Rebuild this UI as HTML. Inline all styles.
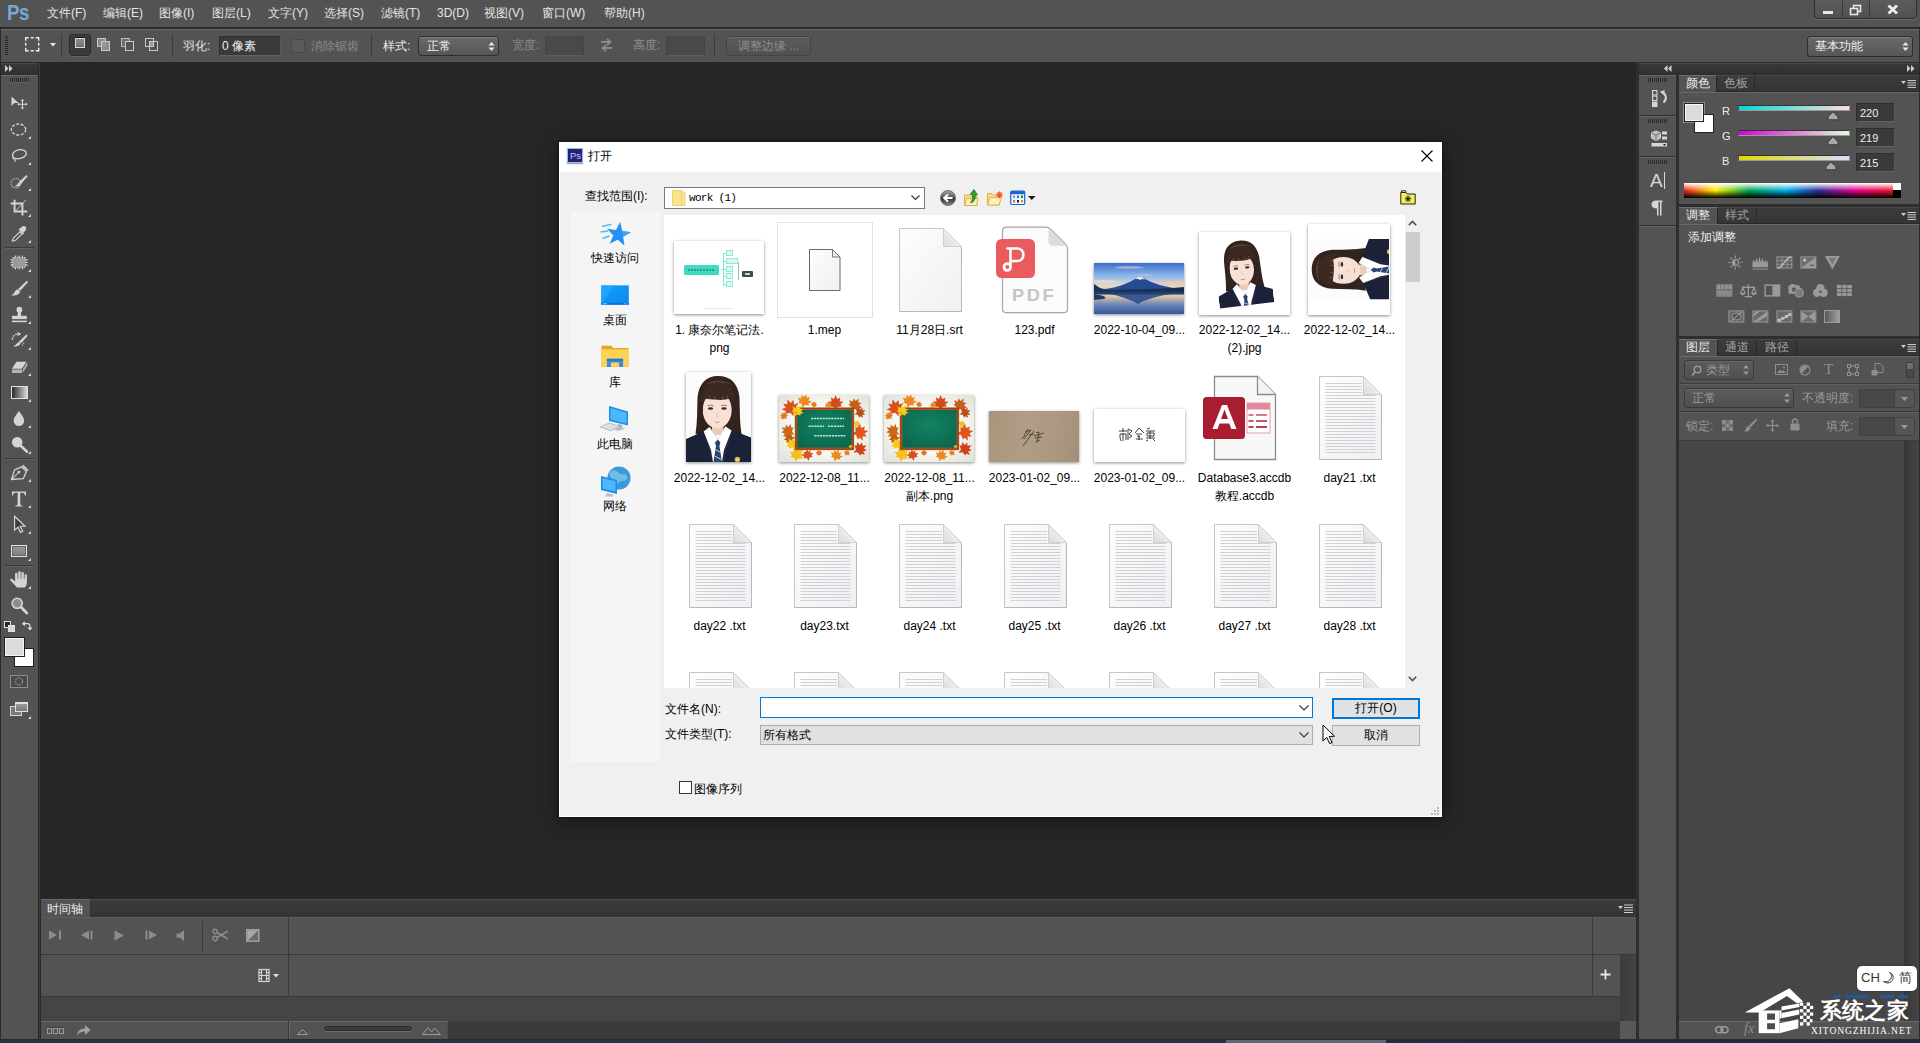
<!DOCTYPE html>
<html lang="zh"><head><meta charset="utf-8"><title>Photoshop</title>
<style>*{box-sizing:border-box;margin:0;padding:0}
html,body{width:1920px;height:1043px;overflow:hidden;background:#262626}
body{font-family:"Liberation Sans",sans-serif;font-size:12px;color:#dcdcdc;position:relative}
.a{position:absolute}
svg.a{overflow:visible}
.t{position:absolute;white-space:nowrap;line-height:14px;height:14px}
.ui{background:#535353}
.dis{color:#8c8c8c}
.tabbar{position:absolute;background:linear-gradient(#3b3b3b,#353535);border-top:1px solid #4a4a4a;border-bottom:1px solid #282828}
.tab{position:absolute;height:16px;border-right:1px solid #2a2a2a;border-top:1px solid #4a4a4a;color:#a4a4a4;text-align:center;line-height:15px;font-size:12px}
.tab.on{background:#535353;color:#ececec;border-top:1px solid #707070;height:17px}
.dd{position:absolute;border:1px solid #2d2d2d;border-radius:3px;background:linear-gradient(#6a6a6a,#565656);box-shadow:inset 0 1px 0 #7e7e7e}
.fld{position:absolute;background:#3a3a3a;border:1px solid #2f2f2f;border-bottom-color:#626262;border-right-color:#5a5a5a}
.fldd{position:absolute;background:#494949;border:1px solid #454545;border-bottom-color:#5c5c5c}
.lbl{position:absolute;white-space:nowrap;color:#000;font-size:12px;line-height:18px;height:18px;text-align:center;width:105px}
.dl{position:absolute;white-space:nowrap;color:#000;font-size:12px;line-height:14px;height:14px}
</style></head>
<body>


<!-- p1_frame -->

<div class="a ui" style="left:0px;top:0px;width:1920px;height:27px;"></div>
<div class="a" style="left:0px;top:27px;width:1920px;height:2px;background:#2a2a2a"></div>
<div class="a ui" style="left:0px;top:29px;width:1920px;height:33px;border-top:1px solid #696969"></div>
<div class="t" style="left:7px;top:-1.5px;font-size:22px;font-weight:bold;color:#7aa7d8;line-height:28px;height:28px;letter-spacing:-0.5px;transform:scaleX(0.85);transform-origin:0 0">Ps</div>
<div class="t" style="left:47px;top:6px;color:#e4e4e4;font-size:12px">文件(F)</div>
<div class="t" style="left:103px;top:6px;color:#e4e4e4;font-size:12px">编辑(E)</div>
<div class="t" style="left:159px;top:6px;color:#e4e4e4;font-size:12px">图像(I)</div>
<div class="t" style="left:212px;top:6px;color:#e4e4e4;font-size:12px">图层(L)</div>
<div class="t" style="left:268px;top:6px;color:#e4e4e4;font-size:12px">文字(Y)</div>
<div class="t" style="left:324px;top:6px;color:#e4e4e4;font-size:12px">选择(S)</div>
<div class="t" style="left:381px;top:6px;color:#e4e4e4;font-size:12px">滤镜(T)</div>
<div class="t" style="left:437px;top:6px;color:#e4e4e4;font-size:12px">3D(D)</div>
<div class="t" style="left:484px;top:6px;color:#e4e4e4;font-size:12px">视图(V)</div>
<div class="t" style="left:542px;top:6px;color:#e4e4e4;font-size:12px">窗口(W)</div>
<div class="t" style="left:604px;top:6px;color:#e4e4e4;font-size:12px">帮助(H)</div>
<div class="a" style="left:1814px;top:-3px;width:103px;height:22px;border:1px solid #2e2e2e;border-radius:4px;background:linear-gradient(#5e5e5e,#505050);box-shadow:0 1px 0 #6a6a6a"></div>
<div class="a" style="left:1842px;top:0px;width:1px;height:18px;background:#3a3a3a"></div>
<div class="a" style="left:1869px;top:0px;width:1px;height:18px;background:#3a3a3a"></div>
<div class="a" style="left:1823px;top:11px;width:10px;height:3px;background:#e8e8e8"></div>
<svg class="a" style="left:1849px;top:4px;" width="14" height="12" viewBox="0 0 14 12"><rect x="4.5" y="1.5" width="7" height="6" fill="none" stroke="#e8e8e8" stroke-width="1.6"/><rect x="1.5" y="4.5" width="7" height="6" fill="#555" stroke="#e8e8e8" stroke-width="1.6"/></svg>
<svg class="a" style="left:1887px;top:4px;" width="12" height="11" viewBox="0 0 12 11"><path d="M1.5 1.5L10 9.5M10 1.5L1.5 9.5" stroke="#ececec" stroke-width="2.9"/></svg>
<div class="a" style="left:5px;top:36px;width:3px;height:1px;background:#2c2c2c"></div>
<div class="a" style="left:5px;top:38px;width:3px;height:1px;background:#2c2c2c"></div>
<div class="a" style="left:5px;top:40px;width:3px;height:1px;background:#2c2c2c"></div>
<div class="a" style="left:5px;top:42px;width:3px;height:1px;background:#2c2c2c"></div>
<div class="a" style="left:5px;top:44px;width:3px;height:1px;background:#2c2c2c"></div>
<div class="a" style="left:5px;top:46px;width:3px;height:1px;background:#2c2c2c"></div>
<div class="a" style="left:5px;top:48px;width:3px;height:1px;background:#2c2c2c"></div>
<div class="a" style="left:5px;top:50px;width:3px;height:1px;background:#2c2c2c"></div>
<div class="a" style="left:5px;top:52px;width:3px;height:1px;background:#2c2c2c"></div>
<div class="a" style="left:5px;top:54px;width:3px;height:1px;background:#2c2c2c"></div>
<div class="a" style="left:0px;top:29px;width:1px;height:33px;background:#2a2a2a"></div>
<div class="a" style="left:1919px;top:29px;width:1px;height:33px;background:#2a2a2a"></div>
<svg class="a" style="left:25px;top:37px;" width="15" height="15" viewBox="0 0 15 15"><rect x="0.7" y="0.7" width="13" height="13" fill="none" stroke="#ececec" stroke-width="1.4" stroke-dasharray="3 2 3 2 6 2 3 2 6 2 3 2 6 2 3 2 3"/></svg>
<svg class="a" style="left:50px;top:43px;" width="6" height="4" viewBox="0 0 6 4"><path d="M0 0h6L3 3.5z" fill="#ececec"/></svg>
<div class="a" style="left:61px;top:34px;width:1px;height:23px;background:#3c3c3c"></div>
<div class="a" style="left:69px;top:34px;width:22px;height:22px;background:#3a3a3a;border:1px solid #2e2e2e;border-radius:3px;box-shadow:0 1px 0 #646464"></div>
<div class="a" style="left:75px;top:38px;width:10px;height:10px;background:linear-gradient(#8e8e8e,#6e6e6e);border:1px solid #d8d8d8;box-shadow:0 -1px 0 #1e1e1e"></div>
<div class="a" style="left:97px;top:38px;width:9px;height:9px;background:#8a8a8a;border:1px solid #c8c8c8"></div>
<div class="a" style="left:101px;top:41px;width:9px;height:10px;background:rgba(150,150,150,.9);border:1px solid #c8c8c8"></div>
<div class="a" style="left:121px;top:38px;width:9px;height:9px;background:#6f6f6f;border:1px solid #b8b8b8"></div>
<div class="a" style="left:125px;top:41px;width:9px;height:10px;background:#535353;border:1px solid #c8c8c8"></div>
<div class="a" style="left:145px;top:38px;width:9px;height:9px;border:1px solid #c8c8c8"></div>
<div class="a" style="left:149px;top:41px;width:9px;height:10px;border:1px solid #c8c8c8"></div>
<div class="a" style="left:149px;top:41px;width:5px;height:6px;background:#9a9a9a;border:1px solid #c8c8c8"></div>
<div class="a" style="left:172px;top:34px;width:1px;height:23px;background:#3c3c3c"></div>
<div class="t" style="left:183px;top:39px;color:#e4e4e4">羽化:</div>
<div class="fld" style="left:219px;top:36px;width:62px;height:20px;"></div>
<div class="t" style="left:222px;top:39px;color:#ececec">0 像素</div>
<div class="a" style="left:291px;top:39px;width:14px;height:14px;background:#5a5a5a;border:1px solid #484848;border-radius:2px"></div>
<div class="t dis" style="left:311px;top:39px;">消除锯齿</div>
<div class="a" style="left:371px;top:34px;width:1px;height:23px;background:#3c3c3c"></div>
<div class="t" style="left:383px;top:39px;color:#ececec">样式:</div>
<div class="dd" style="left:418px;top:36px;width:81px;height:20px;"></div>
<div class="t" style="left:427px;top:39px;color:#f0f0f0">正常</div>
<svg class="a" style="left:488px;top:42px;" width="7" height="9" viewBox="0 0 7 9"><path d="M3.5 0L6.5 3.5H0.5zM3.5 9L6.5 5.5H0.5z" fill="#e8e8e8"/></svg>
<div class="t dis" style="left:512px;top:38px;">宽度:</div>
<div class="fldd" style="left:545px;top:36px;width:39px;height:20px;"></div>
<svg class="a" style="left:599px;top:38px;" width="15" height="14" viewBox="0 0 15 14"><path d="M2 4h9M8 1l3.5 3L8 7M13 10H4M7 7l-3.5 3L7 13" fill="none" stroke="#8a8a8a" stroke-width="1.8"/></svg>
<div class="t dis" style="left:633px;top:38px;">高度:</div>
<div class="fldd" style="left:666px;top:36px;width:39px;height:20px;"></div>
<div class="a" style="left:714px;top:34px;width:1px;height:23px;background:#3c3c3c"></div>
<div class="a" style="left:726px;top:36px;width:85px;height:20px;border:1px solid #444;border-radius:3px;background:linear-gradient(#5c5c5c,#515151);box-shadow:inset 0 1px 0 #686868"></div>
<div class="t" style="left:738px;top:39px;color:#8e8e8e">调整边缘 ...</div>
<div class="dd" style="left:1807px;top:36px;width:106px;height:21px;"></div>
<div class="t" style="left:1815px;top:39px;color:#f0f0f0">基本功能</div>
<svg class="a" style="left:1902px;top:42px;" width="7" height="9" viewBox="0 0 7 9"><path d="M3.5 0L6.5 3.5H0.5zM3.5 9L6.5 5.5H0.5z" fill="#e8e8e8"/></svg>

<!-- p2_tools -->

<div class="a" style="left:0px;top:62px;width:41px;height:977px;background:#2a2a2a"></div>
<div class="a" style="left:39px;top:63px;width:1px;height:976px;background:#3a3a3a"></div>
<div class="a" style="left:0px;top:62px;width:1px;height:981px;background:#2a2a2a"></div>
<div class="a" style="left:0px;top:62px;width:41px;height:1px;background:#2a2a2a"></div>
<div class="a" style="left:1px;top:63px;width:37px;height:11px;background:linear-gradient(#383838,#303030);border-top:1px solid #484848"></div>
<div class="a" style="left:1px;top:74px;width:37px;height:1px;background:#2c2c2c"></div>
<div class="a ui" style="left:1px;top:75px;width:37px;height:964px;border-top:1px solid #6a6a6a"></div>
<svg class="a" style="left:5px;top:65px;" width="8" height="7" viewBox="0 0 8 7"><path d="M0 0l3.5 3.5L0 7zM4 0l3.5 3.5L4 7z" fill="#d0d0d0"/></svg>
<div class="a" style="left:10px;top:78px;width:1px;height:4px;background:#2a2a2a;box-shadow:0 1px 0 #6a6a6a"></div>
<div class="a" style="left:12px;top:78px;width:1px;height:4px;background:#2a2a2a;box-shadow:0 1px 0 #6a6a6a"></div>
<div class="a" style="left:14px;top:78px;width:1px;height:4px;background:#2a2a2a;box-shadow:0 1px 0 #6a6a6a"></div>
<div class="a" style="left:16px;top:78px;width:1px;height:4px;background:#2a2a2a;box-shadow:0 1px 0 #6a6a6a"></div>
<div class="a" style="left:18px;top:78px;width:1px;height:4px;background:#2a2a2a;box-shadow:0 1px 0 #6a6a6a"></div>
<div class="a" style="left:20px;top:78px;width:1px;height:4px;background:#2a2a2a;box-shadow:0 1px 0 #6a6a6a"></div>
<div class="a" style="left:22px;top:78px;width:1px;height:4px;background:#2a2a2a;box-shadow:0 1px 0 #6a6a6a"></div>
<div class="a" style="left:24px;top:78px;width:1px;height:4px;background:#2a2a2a;box-shadow:0 1px 0 #6a6a6a"></div>
<div class="a" style="left:26px;top:78px;width:1px;height:4px;background:#2a2a2a;box-shadow:0 1px 0 #6a6a6a"></div>
<div class="a" style="left:28px;top:78px;width:1px;height:4px;background:#2a2a2a;box-shadow:0 1px 0 #6a6a6a"></div>
<div class="a" style="left:5px;top:247px;width:29px;height:1px;background:#3a3a3a;box-shadow:0 1px 0 #626262"></div>
<div class="a" style="left:5px;top:458px;width:29px;height:1px;background:#3a3a3a;box-shadow:0 1px 0 #626262"></div>
<div class="a" style="left:5px;top:565px;width:29px;height:1px;background:#3a3a3a;box-shadow:0 1px 0 #626262"></div>
<svg class="a" style="left:7.6px;top:91.5px;" width="22.75" height="21" viewBox="0 0 26 24"><path d="M4 5v11l3.5-3.5H12z" fill="#d4d4d4"/><path d="M16.5 9.5v9M12 14h9" stroke="#d4d4d4" stroke-width="1.3"/><path d="M16.5 8l2 2.3h-4zM16.5 20l2-2.3h-4zM10.5 14l2.3-2v4zM22.5 14l-2.3-2v4z" fill="#d4d4d4"/></svg>
<svg class="a" style="left:7.6px;top:118.5px;" width="22.75" height="21" viewBox="0 0 26 24"><ellipse cx="12" cy="12" rx="8.2" ry="6.3" fill="none" stroke="#d4d4d4" stroke-width="1.5" stroke-dasharray="3.4 1.8"/></svg>
<svg class="a" style="left:28px;top:136px;" width="3" height="3" viewBox="0 0 3 3"><path d="M3 0v3H0z" fill="#d8d8d8"/></svg>
<svg class="a" style="left:7.6px;top:144.5px;" width="22.75" height="21" viewBox="0 0 26 24"><ellipse cx="13" cy="10.5" rx="8" ry="5" fill="none" stroke="#d4d4d4" stroke-width="1.5" transform="rotate(-12 13 10.5)"/><path d="M6.5 13.5c-1.5 1-1 2.6.6 2.5 1.6-.2 1.4 2 .2 3.4" fill="none" stroke="#d4d4d4" stroke-width="1.3"/></svg>
<svg class="a" style="left:28px;top:162px;" width="3" height="3" viewBox="0 0 3 3"><path d="M3 0v3H0z" fill="#d8d8d8"/></svg>
<svg class="a" style="left:7.6px;top:170.5px;" width="22.75" height="21" viewBox="0 0 26 24"><circle cx="9" cy="14" r="5.5" fill="none" stroke="#d4d4d4" stroke-width="1.3" stroke-dasharray="1.2 1.3"/><path d="M21 4.5l1.5 1.5-7.5 8.5-2.5-1.8z" fill="#d4d4d4"/><path d="M12.3 12.8l2.5 2c-1.5 3-5 3.6-7.2 2.5 2.2-.6 3-2.6 4.7-4.5z" fill="#d4d4d4"/></svg>
<svg class="a" style="left:28px;top:188px;" width="3" height="3" viewBox="0 0 3 3"><path d="M3 0v3H0z" fill="#d8d8d8"/></svg>
<svg class="a" style="left:7.6px;top:196.5px;" width="22.75" height="21" viewBox="0 0 26 24"><path d="M7.5 3v13.5H22M3 7.5h13.5V21" fill="none" stroke="#d4d4d4" stroke-width="2.2"/><path d="M9 15.5L20.5 3.5" stroke="#d4d4d4" stroke-width="1"/></svg>
<svg class="a" style="left:28px;top:214px;" width="3" height="3" viewBox="0 0 3 3"><path d="M3 0v3H0z" fill="#d8d8d8"/></svg>
<svg class="a" style="left:7.6px;top:222.5px;" width="22.75" height="21" viewBox="0 0 26 24"><path d="M5 20.5l1-3 7.5-7.5 2.5 2.5-7.5 7.5z" fill="none" stroke="#d4d4d4" stroke-width="1.3"/><path d="M12.5 8l5 5 1-1-1-1 2.5-2.5c1.2-1.2 1.2-3 0-4.2-1.2-1.2-3-1.2-4.2 0L13.5 6.8l-1-1z" fill="#d4d4d4"/></svg>
<svg class="a" style="left:28px;top:240px;" width="3" height="3" viewBox="0 0 3 3"><path d="M3 0v3H0z" fill="#d8d8d8"/></svg>
<svg class="a" style="left:7.6px;top:251.5px;" width="22.75" height="21" viewBox="0 0 26 24"><rect x="5" y="6" width="15" height="12" rx="2.5" fill="#9a9a9a" stroke="#d4d4d4" stroke-width="1.4" stroke-dasharray="1.5 1.2"/><path d="M3 9h2M3 12h2M3 15h2M20 9h2.5M20 12h2.5M20 15h2.5M8.5 4v2M12.5 4v2M16.5 4v2M8.5 18v2M12.5 18v2M16.5 18v2" stroke="#d4d4d4" stroke-width="1.2"/></svg>
<svg class="a" style="left:28px;top:269px;" width="3" height="3" viewBox="0 0 3 3"><path d="M3 0v3H0z" fill="#d8d8d8"/></svg>
<svg class="a" style="left:7.6px;top:277.5px;" width="22.75" height="21" viewBox="0 0 26 24"><path d="M21.5 3l1.5 1.5-9 10-2.5-2z" fill="#d4d4d4"/><path d="M11 12.8l3 2.6c-1 4.4-6.5 5.6-11 4 2.5-.3 3.5-1.5 4.5-3.5.8-1.6 2-2.6 3.5-3.1z" fill="#d4d4d4"/></svg>
<svg class="a" style="left:28px;top:295px;" width="3" height="3" viewBox="0 0 3 3"><path d="M3 0v3H0z" fill="#d8d8d8"/></svg>
<svg class="a" style="left:7.6px;top:303.5px;" width="22.75" height="21" viewBox="0 0 26 24"><circle cx="13" cy="6.5" r="3.3" fill="#d4d4d4"/><path d="M11.5 9h3l.8 5h-4.6z" fill="#d4d4d4"/><rect x="4.5" y="13.5" width="17" height="3.8" fill="#d4d4d4"/><rect x="4.5" y="19" width="17" height="1.8" fill="#d4d4d4"/></svg>
<svg class="a" style="left:28px;top:321px;" width="3" height="3" viewBox="0 0 3 3"><path d="M3 0v3H0z" fill="#d8d8d8"/></svg>
<svg class="a" style="left:7.6px;top:329.5px;" width="22.75" height="21" viewBox="0 0 26 24"><path d="M21 5l1.5 1.5-7.5 8.5-2.5-2z" fill="#d4d4d4"/><path d="M12 13.5l2.5 2c-1.5 3-5.5 4-8.5 3 2.5-.5 3.8-2.5 6-5z" fill="#d4d4d4"/><path d="M5 11c0-4 3-6.5 7-6.5" fill="none" stroke="#d4d4d4" stroke-width="1.6" stroke-dasharray="2.2 1.2"/><path d="M11 2l4 2.5L11 7z" fill="#d4d4d4"/><path d="M16 17.5a7 7 0 0 0 2.5-4" fill="none" stroke="#d4d4d4" stroke-width="1.2" stroke-dasharray="1.2 1.2"/></svg>
<svg class="a" style="left:28px;top:347px;" width="3" height="3" viewBox="0 0 3 3"><path d="M3 0v3H0z" fill="#d8d8d8"/></svg>
<svg class="a" style="left:7.6px;top:355.5px;" width="22.75" height="21" viewBox="0 0 26 24"><path d="M9.5 6.5h11.5l-5 8H4.5z" fill="#d4d4d4"/><path d="M4.5 15.5H16v4H4.5zM17 15l5-8v4l-5 8z" fill="#b4b4b4"/></svg>
<svg class="a" style="left:28px;top:373px;" width="3" height="3" viewBox="0 0 3 3"><path d="M3 0v3H0z" fill="#d8d8d8"/></svg>
<div class="a" style="left:11px;top:386px;width:17px;height:13px;border:1px solid #e0e0e0;background:linear-gradient(90deg,#2a2a2a,#d8d8d8)"></div>
<svg class="a" style="left:28px;top:399px;" width="3" height="3" viewBox="0 0 3 3"><path d="M3 0v3H0z" fill="#d8d8d8"/></svg>
<svg class="a" style="left:7.6px;top:407.5px;" width="22.75" height="21" viewBox="0 0 26 24"><path d="M12.5 3.5c3.5 5 6 8 6 11.2a6 6 0 0 1-12 0c0-3.2 2.5-6.2 6-11.2z" fill="#d4d4d4"/></svg>
<svg class="a" style="left:28px;top:425px;" width="3" height="3" viewBox="0 0 3 3"><path d="M3 0v3H0z" fill="#d8d8d8"/></svg>
<svg class="a" style="left:7.6px;top:433.5px;" width="22.75" height="21" viewBox="0 0 26 24"><circle cx="10.5" cy="9.5" r="6" fill="#d4d4d4"/><path d="M14.5 13.5l7 6.5" stroke="#d4d4d4" stroke-width="3" stroke-linecap="round"/></svg>
<svg class="a" style="left:28px;top:451px;" width="3" height="3" viewBox="0 0 3 3"><path d="M3 0v3H0z" fill="#d8d8d8"/></svg>
<svg class="a" style="left:7.6px;top:461.5px;" width="22.75" height="21" viewBox="0 0 26 24"><path d="M4 20l3.5-11 8-3.5 5.5 5.5-3.5 8z" fill="none" stroke="#d4d4d4" stroke-width="1.5"/><path d="M4.5 19.5l7.5-7.5" stroke="#d4d4d4" stroke-width="1.2"/><circle cx="12.5" cy="11.5" r="1.6" fill="#d4d4d4"/><path d="M16 4.5l6 6 1.5-1.5-6-6z" fill="#d4d4d4"/></svg>
<svg class="a" style="left:28px;top:479px;" width="3" height="3" viewBox="0 0 3 3"><path d="M3 0v3H0z" fill="#d8d8d8"/></svg>
<svg class="a" style="left:7.6px;top:487.5px;" width="22.75" height="21" viewBox="0 0 26 24"><path d="M4.5 4h16v4.5h-1.2c-.3-2-1-3-3-3h-2.3v12.5c0 1.5.5 2 2.5 2v1.2H8.5V20c2 0 2.5-.5 2.5-2V5.5H8.7c-2 0-2.7 1-3 3H4.5z" fill="#d4d4d4"/></svg>
<svg class="a" style="left:28px;top:505px;" width="3" height="3" viewBox="0 0 3 3"><path d="M3 0v3H0z" fill="#d8d8d8"/></svg>
<svg class="a" style="left:7.6px;top:513.5px;" width="22.75" height="21" viewBox="0 0 26 24"><path d="M7.5 2.5v16l4-3.5 2.8 6 2.5-1.2-2.8-5.8h5.5z" fill="#3c3c3c" stroke="#d4d4d4" stroke-width="1.4"/></svg>
<svg class="a" style="left:28px;top:531px;" width="3" height="3" viewBox="0 0 3 3"><path d="M3 0v3H0z" fill="#d8d8d8"/></svg>
<div class="a" style="left:11px;top:545px;width:16px;height:12px;border:1px solid #e0e0e0;background:linear-gradient(#9a9a9a,#7e7e7e);box-shadow:inset 0 0 0 1px #666"></div>
<svg class="a" style="left:28px;top:558px;" width="3" height="3" viewBox="0 0 3 3"><path d="M3 0v3H0z" fill="#d8d8d8"/></svg>
<svg class="a" style="left:7.6px;top:568.5px;" width="22.75" height="21" viewBox="0 0 26 24"><path transform="translate(-1 0) scale(1.2 1)" d="M9.5 21C7.5 19 6 16.5 3.2 13.2 2.2 12 3.8 10.6 5 11.6L7.6 14.2V5.5c0-1.6 2.3-1.6 2.3 0V11h.7V3.8c0-1.6 2.3-1.6 2.3 0V11h.7V4.6c0-1.6 2.3-1.6 2.3 0v6.9h.7V7c0-1.5 2.2-1.5 2.2 0v8.5c0 2.5-.8 4-1.8 5.5z" fill="#d4d4d4"/></svg>
<svg class="a" style="left:28px;top:586px;" width="3" height="3" viewBox="0 0 3 3"><path d="M3 0v3H0z" fill="#d8d8d8"/></svg>
<svg class="a" style="left:7.6px;top:594.5px;" width="22.75" height="21" viewBox="0 0 26 24"><circle cx="10.5" cy="9.5" r="5.8" fill="#8c8c8c" stroke="#d4d4d4" stroke-width="1.8"/><path d="M15 14l6.5 6.5" stroke="#d4d4d4" stroke-width="3.2" stroke-linecap="round"/></svg>
<div class="a" style="left:4px;top:621px;width:7px;height:7px;background:#2a2a2a;border:1px solid #e0e0e0"></div>
<div class="a" style="left:8px;top:625px;width:7px;height:7px;background:#d8d8d8;border:1px solid #e0e0e0"></div>
<svg class="a" style="left:21px;top:619px;" width="12" height="12" viewBox="0 0 14 14"><path d="M3.5 5.5h4.5a2.5 2.5 0 0 1 2.5 2.5v3" fill="none" stroke="#e0e0e0" stroke-width="1.4"/><path d="M4.5 2.5L1 5.5l3.5 3zM7.5 10l3 3.5 3-3.5z" fill="#e0e0e0"/></svg>
<div class="a" style="left:14px;top:648px;width:20px;height:19px;background:#fff;border:1px solid #1e1e1e;box-shadow:inset 0 0 0 1px #fff"></div>
<div class="a" style="left:4px;top:637px;width:21px;height:20px;background:#dcdbd7;border:1px solid #1e1e1e;box-shadow:inset 0 0 0 1px #f4f4f4"></div>
<div class="a" style="left:10px;top:675px;width:18px;height:13px;background:#4a4a4a;border:1px solid #8e8e8e"></div>
<svg class="a" style="left:13px;top:676px;" width="12" height="11" viewBox="0 0 12 11"><circle cx="6" cy="5.5" r="3.6" fill="none" stroke="#c8c8c8" stroke-width="1" stroke-dasharray="1 1.1"/></svg>
<div class="a" style="left:10px;top:706px;width:12px;height:10px;background:#7a7a7a;border:1px solid #d8d8d8"></div>
<div class="a" style="left:15px;top:702px;width:13px;height:10px;background:linear-gradient(#9a9a9a,#777);border:1px solid #e0e0e0;border-top:2px solid #e0e0e0"></div>
<svg class="a" style="left:28px;top:716px;" width="3" height="3" viewBox="0 0 3 3"><path d="M3 0v3H0z" fill="#d8d8d8"/></svg>

<!-- p3_timeline -->

<div class="a" style="left:40px;top:898px;width:1598px;height:141px;background:#2a2a2a"></div>
<div class="a" style="left:41px;top:899px;width:1595px;height:18px;background:linear-gradient(#3b3b3b,#353535);border-top:1px solid #4a4a4a"></div>
<div class="a ui" style="left:41px;top:899px;width:50px;height:19px;border-right:1px solid #333;border-top:1px solid #666"></div>
<div class="t" style="left:47px;top:902px;color:#e8e8e8;font-size:12px">时间轴</div>
<svg class="a" style="left:1618px;top:904px;" width="16" height="9" viewBox="0 0 16 9"><path d="M0 2h5L2.5 5z" fill="#d0d0d0"/><path d="M6 1h9M6 3.5h9M6 6h9M6 8.5h9" stroke="#d0d0d0" stroke-width="1"/></svg>
<div class="a ui" style="left:41px;top:917px;width:1595px;height:37px;border-top:1px solid #5e5e5e"></div>
<div class="a" style="left:41px;top:954px;width:1595px;height:1px;background:#3a3a3a"></div>
<div class="a ui" style="left:41px;top:955px;width:1595px;height:41px;"></div>
<div class="a" style="left:41px;top:996px;width:1595px;height:1px;background:#3a3a3a"></div>
<div class="a" style="left:41px;top:997px;width:1595px;height:24px;background:#454545"></div>
<div class="a" style="left:1620px;top:955px;width:16px;height:66px;background:linear-gradient(90deg,#3c3c3c,#444)"></div>
<div class="a" style="left:41px;top:1021px;width:1595px;height:18px;background:#4e4e4e;border-top:1px solid #606060"></div>
<div class="a ui" style="left:41px;top:1021px;width:406px;height:18px;border-top:1px solid #686868"></div>
<div class="a" style="left:448px;top:1021px;width:1172px;height:18px;background:#3a3a3a;border-top:1px solid #404040"></div>
<div class="a" style="left:1620px;top:1021px;width:16px;height:18px;background:#585858"></div>
<div class="a" style="left:288px;top:917px;width:1px;height:80px;background:#3a3a3a"></div>
<div class="a" style="left:288px;top:1021px;width:1px;height:18px;background:#3a3a3a"></div>
<div class="a" style="left:289px;top:1021px;width:1px;height:18px;background:#666"></div>
<div class="a" style="left:1592px;top:917px;width:1px;height:80px;background:#3a3a3a"></div>
<div class="a" style="left:202px;top:921px;width:1px;height:31px;background:#3a3a3a"></div>
<svg class="a" style="left:49px;top:930px;" width="13" height="10" viewBox="0 0 13 10"><path d="M0 0.5l8 4.5-8 4.5z" fill="#8c8c8c"/><rect x="10" y="0.5" width="2" height="9" fill="#8c8c8c"/></svg>
<svg class="a" style="left:80px;top:930px;" width="13" height="10" viewBox="0 0 13 10"><path d="M9 0.5L1 5l8 4.5z" fill="#8c8c8c"/><rect x="10.5" y="0.5" width="2" height="9" fill="#8c8c8c"/></svg>
<svg class="a" style="left:114px;top:930px;" width="11" height="11" viewBox="0 0 11 11"><path d="M0.5 0.5l9.5 5-9.5 5z" fill="#8c8c8c"/></svg>
<svg class="a" style="left:145px;top:930px;" width="13" height="10" viewBox="0 0 13 10"><rect x="0.5" y="0.5" width="2" height="9" fill="#8c8c8c"/><path d="M4 0.5l8 4.5-8 4.5z" fill="#8c8c8c"/></svg>
<svg class="a" style="left:176px;top:930px;" width="9" height="11" viewBox="0 0 9 11"><path d="M0.5 3.5h3L8 0v11L3.5 7.5h-3z" fill="#8c8c8c"/></svg>
<svg class="a" style="left:212px;top:928px;" width="17" height="14" viewBox="0 0 17 14"><circle cx="3" cy="3.5" r="2.2" fill="none" stroke="#8c8c8c" stroke-width="1.4"/><circle cx="3" cy="10.5" r="2.2" fill="none" stroke="#8c8c8c" stroke-width="1.4"/><path d="M5 4.5L16 11M5 9.5L16 3" stroke="#8c8c8c" stroke-width="1.6"/></svg>
<svg class="a" style="left:246px;top:929px;" width="14" height="13" viewBox="0 0 14 13"><rect x="0.75" y="0.75" width="12" height="11.5" fill="#6a6a6a" stroke="#a0a0a0" stroke-width="1.5"/><path d="M1.5 12V1.5H12z" fill="#a8a8a8"/></svg>
<svg class="a" style="left:258px;top:969px;" width="22" height="13" viewBox="0 0 22 13"><rect x="1" y="0.5" width="10" height="12" fill="none" stroke="#d8d8d8" stroke-width="1.2"/><path d="M3.5 0.5v12M8.5 0.5v12M3.5 6.5h5" stroke="#d8d8d8" stroke-width="1"/><path d="M1 3.5h2.5M1 6.5h2.5M1 9.5h2.5M8.5 3.5H11M8.5 6.5H11M8.5 9.5H11" stroke="#d8d8d8" stroke-width="1"/><path d="M15 5h6l-3 3.5z" fill="#e0e0e0"/></svg>
<svg class="a" style="left:1600px;top:969px;" width="11" height="11" viewBox="0 0 11 11"><path d="M5.5 0.5v10M0.5 5.5h10" stroke="#e8e8e8" stroke-width="1.8"/></svg>
<div class="a" style="left:47px;top:1028px;width:5px;height:6px;border:1px solid #9a9a9a;box-shadow:0 -1px 0 #3a3a3a"></div>
<div class="a" style="left:53px;top:1028px;width:5px;height:6px;border:1px solid #9a9a9a;box-shadow:0 -1px 0 #3a3a3a"></div>
<div class="a" style="left:59px;top:1028px;width:5px;height:6px;border:1px solid #9a9a9a;box-shadow:0 -1px 0 #3a3a3a"></div>
<svg class="a" style="left:76px;top:1024px;" width="15" height="12" viewBox="0 0 15 12"><path d="M1 11.5C1.5 7 4.5 4.5 9 4.5V1l5.5 5L9 11V7.5C5.5 7.5 3 8.5 1 11.5z" fill="#a0a0a0"/></svg>
<svg class="a" style="left:297px;top:1029px;" width="11" height="6" viewBox="0 0 11 6"><path d="M0.5 5.5L5.5 0.5l5 5z" fill="none" stroke="#9a9a9a" stroke-width="1"/><path d="M2 5.5h7" stroke="#9a9a9a"/></svg>
<div class="a" style="left:324px;top:1026px;width:88px;height:5px;background:#3a3a3a;border:1px solid #2c2c2c;border-radius:3px;box-shadow:0 1px 0 #6a6a6a"></div>
<svg class="a" style="left:422px;top:1026px;" width="19" height="9" viewBox="0 0 19 9"><path d="M0.5 8.5L6 1.5l3.5 4.5 3-4 6 6.5z" fill="none" stroke="#9a9a9a" stroke-width="1"/></svg>

<!-- p4_right -->

<div class="a" style="left:1636px;top:62px;width:284px;height:977px;background:#2e2e2e"></div>
<div class="a" style="left:1639px;top:63px;width:281px;height:11px;background:linear-gradient(#383838,#303030);border-top:1px solid #484848"></div>
<svg class="a" style="left:1664px;top:65px;" width="8" height="7" viewBox="0 0 8 7"><path d="M3.5 0L0 3.5 3.5 7zM7.5 0L4 3.5 7.5 7z" fill="#d0d0d0"/></svg>
<svg class="a" style="left:1907px;top:65px;" width="8" height="7" viewBox="0 0 8 7"><path d="M0 0l3.5 3.5L0 7zM4 0l3.5 3.5L4 7z" fill="#d0d0d0"/></svg>
<div class="a ui" style="left:1639px;top:75px;width:37px;height:40px;border-top:1px solid #666"></div>
<div class="a" style="left:1648px;top:78px;width:1px;height:4px;background:#2c2c2c"></div>
<div class="a" style="left:1650px;top:78px;width:1px;height:4px;background:#2c2c2c"></div>
<div class="a" style="left:1652px;top:78px;width:1px;height:4px;background:#2c2c2c"></div>
<div class="a" style="left:1654px;top:78px;width:1px;height:4px;background:#2c2c2c"></div>
<div class="a" style="left:1656px;top:78px;width:1px;height:4px;background:#2c2c2c"></div>
<div class="a" style="left:1658px;top:78px;width:1px;height:4px;background:#2c2c2c"></div>
<div class="a" style="left:1660px;top:78px;width:1px;height:4px;background:#2c2c2c"></div>
<div class="a" style="left:1662px;top:78px;width:1px;height:4px;background:#2c2c2c"></div>
<div class="a" style="left:1664px;top:78px;width:1px;height:4px;background:#2c2c2c"></div>
<div class="a" style="left:1666px;top:78px;width:1px;height:4px;background:#2c2c2c"></div>
<div class="a ui" style="left:1639px;top:116px;width:37px;height:40px;border-top:1px solid #666"></div>
<div class="a" style="left:1648px;top:119px;width:1px;height:4px;background:#2c2c2c"></div>
<div class="a" style="left:1650px;top:119px;width:1px;height:4px;background:#2c2c2c"></div>
<div class="a" style="left:1652px;top:119px;width:1px;height:4px;background:#2c2c2c"></div>
<div class="a" style="left:1654px;top:119px;width:1px;height:4px;background:#2c2c2c"></div>
<div class="a" style="left:1656px;top:119px;width:1px;height:4px;background:#2c2c2c"></div>
<div class="a" style="left:1658px;top:119px;width:1px;height:4px;background:#2c2c2c"></div>
<div class="a" style="left:1660px;top:119px;width:1px;height:4px;background:#2c2c2c"></div>
<div class="a" style="left:1662px;top:119px;width:1px;height:4px;background:#2c2c2c"></div>
<div class="a" style="left:1664px;top:119px;width:1px;height:4px;background:#2c2c2c"></div>
<div class="a" style="left:1666px;top:119px;width:1px;height:4px;background:#2c2c2c"></div>
<div class="a ui" style="left:1639px;top:157px;width:37px;height:68px;border-top:1px solid #666"></div>
<div class="a" style="left:1648px;top:160px;width:1px;height:4px;background:#2c2c2c"></div>
<div class="a" style="left:1650px;top:160px;width:1px;height:4px;background:#2c2c2c"></div>
<div class="a" style="left:1652px;top:160px;width:1px;height:4px;background:#2c2c2c"></div>
<div class="a" style="left:1654px;top:160px;width:1px;height:4px;background:#2c2c2c"></div>
<div class="a" style="left:1656px;top:160px;width:1px;height:4px;background:#2c2c2c"></div>
<div class="a" style="left:1658px;top:160px;width:1px;height:4px;background:#2c2c2c"></div>
<div class="a" style="left:1660px;top:160px;width:1px;height:4px;background:#2c2c2c"></div>
<div class="a" style="left:1662px;top:160px;width:1px;height:4px;background:#2c2c2c"></div>
<div class="a" style="left:1664px;top:160px;width:1px;height:4px;background:#2c2c2c"></div>
<div class="a" style="left:1666px;top:160px;width:1px;height:4px;background:#2c2c2c"></div>
<div class="a ui" style="left:1639px;top:226px;width:37px;height:813px;border-top:1px solid #666"></div>
<svg class="a" style="left:1652px;top:90px;" width="16.5" height="17.6" viewBox="0 0 15 16"><rect x="0.5" y="0.5" width="4" height="4" fill="none" stroke="#d6d6d6"/><rect x="0.5" y="5.5" width="4" height="4" fill="none" stroke="#d6d6d6"/><rect x="0" y="10.5" width="5" height="5" fill="#d6d6d6"/><path d="M9 2c4 1.5 5 6 1.5 9.5" fill="none" stroke="#d6d6d6" stroke-width="1.8"/><path d="M7 1.5l4.5-1.5-.5 4.5z" fill="#d6d6d6"/></svg>
<svg class="a" style="left:1651px;top:130px;" width="17" height="18" viewBox="0 0 17 18"><path d="M5 1l4.5 2v5L5 10.5 0.5 8V3z" fill="#bdbdbd" stroke="#d6d6d6" stroke-width="1"/><path d="M0.5 3L5 5.2 9.5 3M5 5.2v5" fill="none" stroke="#707070" stroke-width="1"/><rect x="11" y="1.5" width="5" height="3" fill="#d6d6d6"/><rect x="11" y="6.5" width="5" height="3" fill="#d6d6d6"/><rect x="0.5" y="13" width="15.5" height="3.5" fill="#d6d6d6"/><path d="M12 14h3l-1.5 2z" fill="#222"/></svg>
<div class="t" style="left:1650px;top:170px;font-size:19px;line-height:22px;height:22px;color:#d8d8d8">A</div>
<div class="a" style="left:1664px;top:172px;width:1px;height:17px;background:#d8d8d8"></div>
<svg class="a" style="left:1651px;top:200px;" width="12" height="16" viewBox="0 0 12 16"><path d="M5 0.5h6.5v1.5H10.5V15.5H9V2H7.5v13.5H6V8.5C2.5 8.5 0.5 7 0.5 4.5S2.5 0.5 5 0.5z" fill="#d6d6d6"/></svg>
<div class="tabbar" style="left:1679px;top:75px;width:241px;height:17px;"></div>
<div class="tab on" style="left:1679px;top:75px;width:38px">颜色</div>
<div class="tab" style="left:1717px;top:75px;width:38px">色板</div>
<div class="a ui" style="left:1679px;top:92px;width:241px;height:112px;border-top:1px solid #696969"></div>
<svg class="a" style="left:1901px;top:80px;" width="16" height="8" viewBox="0 0 16 8"><path d="M0 1h5L2.5 4z" fill="#d0d0d0"/><path d="M6.5 0.5h8.5M6.5 2.8h8.5M6.5 5.1h8.5M6.5 7.4h8.5" stroke="#d0d0d0" stroke-width="1"/></svg>
<div class="a" style="left:1683px;top:102px;width:22px;height:21px;border:1px solid #8a8a8a"></div>
<div class="a" style="left:1694px;top:114px;width:20px;height:19px;background:#fff;border:1px solid #222"></div>
<div class="a" style="left:1684px;top:103px;width:20px;height:19px;background:#dcdbd7;border:1px solid #222;box-shadow:inset 0 0 0 1px #f8f8f8"></div>
<div class="t" style="left:1722px;top:104px;color:#ececec;font-size:11px">R</div>
<div class="a" style="left:1738px;top:105px;width:112px;height:6px;background:linear-gradient(90deg,#00dbd7,#ffdbd7);border:1px solid #9a9a9a;border-top-color:#333;border-left-color:#555"></div>
<svg class="a" style="left:1827px;top:111px;" width="12" height="10" viewBox="0 0 12 10"><path d="M6 0.8L11 5.8v3H1v-3z" fill="#a8a8a8" stroke="#333" stroke-width="0.9"/></svg>
<div class="fld" style="left:1856px;top:103px;width:39px;height:19px;"></div>
<div class="t" style="left:1860px;top:106px;color:#f0f0f0;font-size:11px">220</div>
<div class="t" style="left:1722px;top:129px;color:#ececec;font-size:11px">G</div>
<div class="a" style="left:1738px;top:130px;width:112px;height:6px;background:linear-gradient(90deg,#dc00d7,#dcffd7);border:1px solid #9a9a9a;border-top-color:#333;border-left-color:#555"></div>
<svg class="a" style="left:1827px;top:136px;" width="12" height="10" viewBox="0 0 12 10"><path d="M6 0.8L11 5.8v3H1v-3z" fill="#a8a8a8" stroke="#333" stroke-width="0.9"/></svg>
<div class="fld" style="left:1856px;top:128px;width:39px;height:19px;"></div>
<div class="t" style="left:1860px;top:131px;color:#f0f0f0;font-size:11px">219</div>
<div class="t" style="left:1722px;top:154px;color:#ececec;font-size:11px">B</div>
<div class="a" style="left:1738px;top:155px;width:112px;height:6px;background:linear-gradient(90deg,#dcdb00,#dcdbff);border:1px solid #9a9a9a;border-top-color:#333;border-left-color:#555"></div>
<svg class="a" style="left:1825px;top:161px;" width="12" height="10" viewBox="0 0 12 10"><path d="M6 0.8L11 5.8v3H1v-3z" fill="#a8a8a8" stroke="#333" stroke-width="0.9"/></svg>
<div class="fld" style="left:1856px;top:153px;width:39px;height:19px;"></div>
<div class="t" style="left:1860px;top:156px;color:#f0f0f0;font-size:11px">215</div>
<div class="a" style="left:1684px;top:183px;width:209px;height:15px;background:linear-gradient(90deg,#ee1c24 0%,#fff200 15%,#00a651 31%,#00aeef 49%,#2e3192 64%,#ec008c 82%,#ee1c24 100%)"></div>
<div class="a" style="left:1684px;top:183px;width:209px;height:15px;background:linear-gradient(180deg,#fff 0%,rgba(255,255,255,0) 50%,rgba(0,0,0,0) 50%,#000 100%)"></div>
<div class="a" style="left:1893px;top:183px;width:8px;height:7px;background:#fff"></div>
<div class="a" style="left:1893px;top:190px;width:8px;height:8px;background:#000"></div>
<div class="tabbar" style="left:1679px;top:207px;width:241px;height:17px;"></div>
<div class="tab on" style="left:1679px;top:207px;width:39px">调整</div>
<div class="tab" style="left:1718px;top:207px;width:39px">样式</div>
<div class="a ui" style="left:1679px;top:224px;width:241px;height:112px;border-top:1px solid #696969"></div>
<svg class="a" style="left:1901px;top:212px;" width="16" height="8" viewBox="0 0 16 8"><path d="M0 1h5L2.5 4z" fill="#d0d0d0"/><path d="M6.5 0.5h8.5M6.5 2.8h8.5M6.5 5.1h8.5M6.5 7.4h8.5" stroke="#d0d0d0" stroke-width="1"/></svg>
<div class="t" style="left:1688px;top:230px;color:#f0f0f0">添加调整</div>
<svg class="a" style="left:1726.6px;top:254.5px;" width="16.8" height="15" viewBox="0 0 18 16"><circle cx="9" cy="8" r="3.3" fill="none" stroke="#9a9a9a" stroke-width="1.2"/><path d="M9 4.7a3.3 3.3 0 0 0 0 6.6z" fill="#9a9a9a"/><path d="M9 0.5v2.5M9 13v2.5M1.5 8H4M14 8h2.5M3.7 2.7l1.8 1.8M12.5 11.5l1.8 1.8M3.7 13.3l1.8-1.8M12.5 4.5l1.8-1.8" stroke="#9a9a9a" stroke-width="1.3"/></svg>
<svg class="a" style="left:1751.6px;top:254.5px;" width="16.8" height="15" viewBox="0 0 18 16"><path d="M0.5 13V8l1.5-3 1.5 3 1.5-5 1.5 5L8 1.5 9.5 8 11 3l1.5 5L14 5l1.5 3 1.5-2v7z" fill="#9a9a9a"/><path d="M0.5 15h17" stroke="#9a9a9a"/></svg>
<svg class="a" style="left:1775.6px;top:254.5px;" width="16.8" height="15" viewBox="0 0 18 16"><rect x="1" y="2" width="16" height="12" fill="#626262" stroke="#9a9a9a"/><path d="M1 6h16M1 10h16M6.5 2v12M12 2v12" stroke="#9a9a9a" stroke-width="0.8"/><path d="M1.5 14C9 13 9 3 16.5 2" fill="none" stroke="#c0c0c0" stroke-width="1.4"/></svg>
<svg class="a" style="left:1799.6px;top:254.5px;" width="16.8" height="15" viewBox="0 0 18 16"><rect x="1" y="2" width="16" height="12" fill="#6a6a6a" stroke="#9a9a9a"/><path d="M1 14L17 2v12z" fill="#9a9a9a"/><path d="M3 5.5h4M5 3.5v4" stroke="#ddd" stroke-width="1"/><path d="M11 11h4" stroke="#444" stroke-width="1"/></svg>
<svg class="a" style="left:1823.6px;top:254.5px;" width="16.8" height="15" viewBox="0 0 18 16"><path d="M1 1h16L9 15.5z" fill="#9a9a9a"/><path d="M5 3h8L9 10z" fill="#777"/></svg>
<svg class="a" style="left:1715.6px;top:282.5px;" width="16.8" height="15" viewBox="0 0 18 16"><rect x="1" y="2" width="16" height="12" fill="#6a6a6a" stroke="#9a9a9a"/><rect x="1.5" y="2.5" width="15" height="4" fill="#9a9a9a"/><path d="M5 2.5v4M9 2.5v4M13 2.5v4" stroke="#666"/><rect x="1.5" y="8" width="15" height="5.5" fill="#8a8a8a"/></svg>
<svg class="a" style="left:1739.6px;top:282.5px;" width="16.8" height="15" viewBox="0 0 18 16"><path d="M9 1v13M2 4.5h14M5 14.5h8" stroke="#9a9a9a" stroke-width="1.4"/><path d="M0.5 11L3 5l2.5 6zM12.5 11L15 5l2.5 6z" fill="none" stroke="#9a9a9a" stroke-width="1.1"/><path d="M0.5 11h5a2.5 2 0 0 1-5 0zM12.5 11h5a2.5 2 0 0 1-5 0z" fill="#9a9a9a"/></svg>
<svg class="a" style="left:1763.6px;top:282.5px;" width="16.8" height="15" viewBox="0 0 18 16"><rect x="1" y="2" width="16" height="12" fill="#9a9a9a" stroke="#9a9a9a"/><rect x="2" y="3" width="7" height="10" fill="#535353"/></svg>
<svg class="a" style="left:1787.6px;top:282.5px;" width="16.8" height="15" viewBox="0 0 18 16"><rect x="0.5" y="2.5" width="12" height="9" rx="1" fill="#9a9a9a"/><rect x="3" y="1" width="4" height="2" fill="#9a9a9a"/><circle cx="6.5" cy="7" r="2.5" fill="#5a5a5a"/><circle cx="12" cy="10.5" r="4.5" fill="#7a7a7a" stroke="#9a9a9a" stroke-width="1.2"/></svg>
<svg class="a" style="left:1811.6px;top:282.5px;" width="16.8" height="15" viewBox="0 0 18 16"><circle cx="9" cy="5.5" r="4.5" fill="#9a9a9a"/><circle cx="5.5" cy="10.5" r="4.5" fill="#9a9a9a"/><circle cx="12.5" cy="10.5" r="4.5" fill="#9a9a9a"/><path d="M9 7l2 3.5H7z" fill="#5a5a5a"/></svg>
<svg class="a" style="left:1835.6px;top:282.5px;" width="16.8" height="15" viewBox="0 0 18 16"><rect x="1" y="2" width="16" height="12" fill="#9a9a9a"/><path d="M1 6h16M1 10h16M6.3 2v12M11.6 2v12" stroke="#5a5a5a" stroke-width="1"/></svg>
<svg class="a" style="left:1727.6px;top:308.5px;" width="16.8" height="15" viewBox="0 0 18 16"><rect x="1" y="2" width="16" height="12" fill="#6a6a6a" stroke="#9a9a9a"/><ellipse cx="9" cy="8" rx="4.5" ry="3.5" fill="#535353" stroke="#9a9a9a"/><path d="M3 13L15 3" stroke="#9a9a9a" stroke-width="1.2"/></svg>
<svg class="a" style="left:1751.6px;top:308.5px;" width="16.8" height="15" viewBox="0 0 18 16"><rect x="1" y="2" width="16" height="12" fill="#6a6a6a" stroke="#9a9a9a"/><path d="M1.5 13.5L16.5 2.5v5L6 13.5zM1.5 8L9 2.5h-4L1.5 5z" fill="#9a9a9a"/></svg>
<svg class="a" style="left:1775.6px;top:308.5px;" width="16.8" height="15" viewBox="0 0 18 16"><rect x="1" y="2" width="16" height="12" fill="#6a6a6a" stroke="#9a9a9a"/><path d="M1.5 13.5v-3h4v-2h4v-2h3.5v-2h3.5v3h-3.5v2h-4v2h-3.5v2z" fill="#c0c0c0"/></svg>
<svg class="a" style="left:1799.6px;top:308.5px;" width="16.8" height="15" viewBox="0 0 18 16"><rect x="1" y="2" width="16" height="12" fill="#6a6a6a" stroke="#9a9a9a"/><path d="M1.5 2.5l7.5 5.5-7.5 5.5zM16.5 2.5L9 8l7.5 5.5z" fill="#9a9a9a"/></svg>
<div class="a" style="left:1824px;top:310px;width:16px;height:13px;border:1px solid #9a9a9a;background:linear-gradient(90deg,#5a5a5a,#a0a0a0)"></div>
<div class="tabbar" style="left:1679px;top:339px;width:241px;height:17px;"></div>
<div class="tab on" style="left:1679px;top:339px;width:39px">图层</div>
<div class="tab" style="left:1718px;top:339px;width:39px">通道</div>
<div class="tab" style="left:1757px;top:339px;width:40px">路径</div>
<div class="a ui" style="left:1679px;top:356px;width:241px;height:683px;border-top:1px solid #696969"></div>
<svg class="a" style="left:1901px;top:344px;" width="16" height="8" viewBox="0 0 16 8"><path d="M0 1h5L2.5 4z" fill="#d0d0d0"/><path d="M6.5 0.5h8.5M6.5 2.8h8.5M6.5 5.1h8.5M6.5 7.4h8.5" stroke="#d0d0d0" stroke-width="1"/></svg>
<div class="a" style="left:1679px;top:383px;width:241px;height:1px;background:#3c3c3c;box-shadow:0 1px 0 #606060"></div>
<div class="a" style="left:1679px;top:411px;width:241px;height:1px;background:#3c3c3c;box-shadow:0 1px 0 #606060"></div>
<div class="a" style="left:1679px;top:440px;width:241px;height:1px;background:#3c3c3c"></div>
<div class="a" style="left:1679px;top:441px;width:225px;height:580px;background:#464646"></div>
<div class="a" style="left:1904px;top:441px;width:15px;height:580px;background:linear-gradient(90deg,#353535,#3c3c3c 30%,#454545)"></div>
<div class="a ui" style="left:1679px;top:1021px;width:241px;height:18px;border-top:1px solid #686868"></div>
<div class="a" style="left:1684px;top:360px;width:70px;height:20px;border:1px solid #3a3a3a;border-radius:3px;background:linear-gradient(#5c5c5c,#4e4e4e);box-shadow:inset 0 1px 0 #666"></div>
<svg class="a" style="left:1691px;top:365px;" width="11" height="11" viewBox="0 0 11 11"><circle cx="6.5" cy="4.5" r="3.3" fill="none" stroke="#9a9a9a" stroke-width="1.5"/><path d="M4 7L1 10.5" stroke="#9a9a9a" stroke-width="1.8"/></svg>
<div class="t" style="left:1706px;top:363px;color:#9a9a9a">类型</div>
<svg class="a" style="left:1743px;top:365px;" width="6" height="10" viewBox="0 0 6 10"><path d="M3 0l3 3.5H0zM3 10l3-3.5H0z" fill="#9a9a9a"/></svg>
<svg class="a" style="left:1775px;top:364px;" width="13" height="11" viewBox="0 0 13 11"><rect x="0.5" y="0.5" width="12" height="10" fill="none" stroke="#8e8e8e"/><path d="M2 9l3-3.5 2 2 1.5-1.5L11 9z" fill="#8e8e8e"/><circle cx="9" cy="3.5" r="1" fill="#8e8e8e"/></svg>
<svg class="a" style="left:1799px;top:364px;" width="12" height="12" viewBox="0 0 12 12"><circle cx="6" cy="6" r="5" fill="none" stroke="#8e8e8e" stroke-width="1.2"/><path d="M2.5 9.5a5 5 0 0 1 7-7z" fill="#8e8e8e"/></svg>
<div class="t" style="left:1824px;top:361px;color:#8e8e8e;font-family:'Liberation Serif',serif;font-size:15px;line-height:16px;height:16px">T</div>
<svg class="a" style="left:1847px;top:364px;" width="12" height="12" viewBox="0 0 12 12"><rect x="2" y="2" width="8" height="8" fill="none" stroke="#8e8e8e" stroke-width="1.2"/><rect x="0.5" y="0.5" width="3" height="3" fill="#535353" stroke="#8e8e8e"/><rect x="8.5" y="0.5" width="3" height="3" fill="#535353" stroke="#8e8e8e"/><rect x="0.5" y="8.5" width="3" height="3" fill="#535353" stroke="#8e8e8e"/><rect x="8.5" y="8.5" width="3" height="3" fill="#535353" stroke="#8e8e8e"/></svg>
<svg class="a" style="left:1871px;top:363px;" width="13" height="13" viewBox="0 0 13 13"><path d="M4 0.5h5l3 3v6H4z" fill="none" stroke="#8e8e8e"/><rect x="0.5" y="7" width="6" height="5.5" fill="#8e8e8e"/></svg>
<div class="a" style="left:1906px;top:362px;width:8px;height:16px;background:#4a4a4a;border:1px solid #3c3c3c;border-radius:1px"></div>
<div class="a" style="left:1907px;top:363px;width:6px;height:6px;background:#6e6e6e"></div>
<div class="a" style="left:1684px;top:388px;width:110px;height:20px;border:1px solid #3a3a3a;border-radius:3px;background:linear-gradient(#5c5c5c,#4e4e4e);box-shadow:inset 0 1px 0 #666"></div>
<div class="t" style="left:1692px;top:391px;color:#9a9a9a">正常</div>
<svg class="a" style="left:1784px;top:393px;" width="6" height="10" viewBox="0 0 6 10"><path d="M3 0l3 3.5H0zM3 10l3-3.5H0z" fill="#9a9a9a"/></svg>
<div class="t" style="left:1802px;top:391px;color:#9a9a9a">不透明度:</div>
<div class="a" style="left:1859px;top:389px;width:56px;height:19px;background:#484848;border:1px solid #404040;border-radius:2px"></div>
<div class="a" style="left:1894px;top:390px;width:20px;height:17px;background:#565656;border-left:1px solid #404040"></div>
<svg class="a" style="left:1901px;top:397px;" width="7" height="4" viewBox="0 0 7 4"><path d="M0 0h7L3.5 4z" fill="#9a9a9a"/></svg>
<div class="t" style="left:1686px;top:419px;color:#9a9a9a">锁定:</div>
<svg class="a" style="left:1722px;top:420px;" width="11" height="11" viewBox="0 0 11 11"><rect x="0" y="0" width="11" height="11" fill="#6c6c6c"/><path d="M0 0h3.7v3.7H0zM7.3 0H11v3.7H7.3zM3.7 3.7h3.6v3.6H3.7zM0 7.3h3.7V11H0zM7.3 7.3H11V11H7.3z" fill="#8e8e8e"/></svg>
<svg class="a" style="left:1743px;top:418px;" width="15" height="14" viewBox="0 0 15 14"><path d="M13.5 0.5l1 1-7 8-2-1.5z" fill="#8e8e8e"/><path d="M5 8l2.5 2.2c-.8 3.3-4.5 4-7.5 3 1.8-.3 2.5-1.2 3-2.5.4-1.2 1-2.2 2-2.7z" fill="#8e8e8e"/></svg>
<svg class="a" style="left:1766px;top:419px;" width="13" height="13" viewBox="0 0 13 13"><path d="M6.5 1v11M1 6.5h11" stroke="#8e8e8e" stroke-width="1.2"/><path d="M6.5 0l2 2.5h-4zM6.5 13l2-2.5h-4zM0 6.5l2.5-2v4zM13 6.5l-2.5-2v4z" fill="#8e8e8e"/></svg>
<svg class="a" style="left:1790px;top:418px;" width="10" height="13" viewBox="0 0 10 13"><rect x="0.5" y="5.5" width="9" height="7" rx="1" fill="#8e8e8e"/><path d="M2.5 5.5V3.5a2.5 2.5 0 0 1 5 0v2" fill="none" stroke="#8e8e8e" stroke-width="1.4"/></svg>
<div class="t" style="left:1826px;top:419px;color:#9a9a9a">填充:</div>
<div class="a" style="left:1859px;top:417px;width:56px;height:19px;background:#484848;border:1px solid #404040;border-radius:2px"></div>
<div class="a" style="left:1894px;top:418px;width:20px;height:17px;background:#565656;border-left:1px solid #404040"></div>
<svg class="a" style="left:1901px;top:425px;" width="7" height="4" viewBox="0 0 7 4"><path d="M0 0h7L3.5 4z" fill="#9a9a9a"/></svg>
<svg class="a" style="left:1715px;top:1026px;" width="14" height="8" viewBox="0 0 14 8"><rect x="0.8" y="0.8" width="7" height="6" rx="3" fill="none" stroke="#9a9a9a" stroke-width="1.5"/><rect x="6" y="0.8" width="7" height="6" rx="3" fill="none" stroke="#9a9a9a" stroke-width="1.5"/></svg>
<div class="t" style="left:1744px;top:1022px;color:#8e8e8e;font-style:italic;font-family:'Liberation Serif',serif;font-size:14px">fx</div>
<div class="a" style="left:1919px;top:62px;width:1px;height:977px;background:#2a2a2a"></div>

<!-- p5_dialog -->

<svg width="0" height="0" style="position:absolute"><defs>
<linearGradient id="pg" x1="0" y1="0" x2="1" y2="1"><stop offset="0" stop-color="#fdfdfd"/><stop offset="1" stop-color="#f0f0f3"/></linearGradient>
<linearGradient id="fold" x1="0" y1="1" x2="1" y2="0"><stop offset="0" stop-color="#dadadc"/><stop offset="0.5" stop-color="#eeeef0"/><stop offset="1" stop-color="#f8f8f8"/></linearGradient>
<pattern id="lines" x="0" y="7" width="4" height="3" patternUnits="userSpaceOnUse"><rect x="0" y="0" width="4" height="1" fill="#d0d1d4"/></pattern>
<symbol id="txt" viewBox="0 0 63 84"><path d="M0.5 0.5H44.5L62.5 18.5V83.5H0.5z" fill="url(#pg)" stroke="#c6c6c9" stroke-width="1"/><path d="M62.5 18.5V83.5H0.5" fill="none" stroke="#b8b8bc" stroke-width="1"/><rect x="6.5" y="7" width="36.5" height="12" fill="url(#lines)"/><rect x="6.5" y="19" width="50" height="58" fill="url(#lines)"/><path d="M44.5 0.5V18.5H62.5z" fill="url(#fold)" stroke="#c8c8cb" stroke-width="0.8"/></symbol><symbol id="blank" viewBox="0 0 63 84"><path d="M0.5 0.5H44.5L62.5 18.5V83.5H0.5z" fill="url(#pg)" stroke="#c6c6c9" stroke-width="1"/><path d="M62.5 18.5V83.5H0.5" fill="none" stroke="#b8b8bc" stroke-width="1"/><path d="M44.5 0.5V18.5H62.5z" fill="url(#fold)" stroke="#c8c8cb" stroke-width="0.8"/></symbol>
<symbol id="girl" viewBox="0 0 65 90">
<path d="M32 4C20 4 12.5 12 11.5 26c-.5 12 0 24-2 36h46c-2-12-1.5-24-2-36C52.5 12 45 4 32 4z" fill="#33231e"/>
<path d="M19 13c6-6 20-6 27 0-7-3-20-3-27 0z" fill="#6a4c40" opacity="0.6"/>
<path d="M26 48h11.5v15H26z" fill="#eccbbb"/>
<ellipse cx="31.2" cy="38" rx="14.5" ry="18.5" fill="#f7e0d4"/>
<path d="M14.5 33C14 20 20 10.5 32 10.5c11 0 17.5 8.5 17 22.5-1.5-4-3-6-4.5-6.5-3.5 1.2-8.5 1.6-13.5 1.3-5-.2-9-.8-12-1.3-2 1-3.5 3.5-4.5 6.5z" fill="#3b2922"/><path d="M23.5 23.5l-.5 4M29 24l-.3 4M36.5 24l.3 4M41 23.5l.6 3.5" stroke="#caa090" stroke-width="0.5" opacity="0.7"/>
<path d="M14.5 30c-.5 10 .5 20-1.5 30.5h4.5c.5-8-1-18-.5-28zM49 30c.5 10-.5 20 2 30.5h-4.5c-.5-8 .7-18 .5-28z" fill="#33231e"/>
<ellipse cx="24.5" cy="36.5" rx="2.7" ry="1.3" fill="#3a2a28"/><ellipse cx="38" cy="36.5" rx="2.7" ry="1.3" fill="#3a2a28"/>
<path d="M21.5 33.8c2-.8 4-.8 6 0M35 33.8c2-.8 4-.8 6 0" stroke="#6a4a40" stroke-width="0.7" fill="none"/>
<path d="M31.3 41l-.8 3.5h1.6" stroke="#e2bcae" stroke-width="0.8" fill="none"/>
<path d="M28 49.3c2 .8 4.4.8 6.4 0-1.5 1.9-4.9 1.9-6.4 0z" fill="#d85e6a"/>
<path d="M0 67l18.5-8 13 13 14-14L65 65.5V90H0z" fill="#1b2137"/>
<path d="M18.5 59L27 90M45.5 58L37 90" stroke="#2c3454" stroke-width="0.8"/>
<path d="M17.7 59.5l5.8-4.5 8.2 13 7.8-13.5 6.1 4L38 78l-2 12h-9l-2-12z" fill="#fff"/>
<path d="M23.5 55l8.2 13 7.8-13.5" fill="none" stroke="#dcdde4" stroke-width="0.7"/>
<path d="M29 70.5l2.7-3 2.7 3-1 3.5L36 90h-8.5L30 74z" fill="#2c4270"/><path d="M29.5 77.5l5 2.8M28.7 84l6.5 3.5" stroke="#cdd5e6" stroke-width="1"/>
<circle cx="51.4" cy="87.5" r="2.8" fill="#d6ae48"/><circle cx="51.4" cy="87.5" r="1.2" fill="#f4e4a8"/></symbol>
<symbol id="board" viewBox="0 0 90 67"><rect width="90" height="67" fill="url(#bbg)"/><use href="#leaf" fill="#d8501c" transform="translate(11.5 12.8) rotate(-20) scale(0.9) translate(-10 -10)"/><use href="#leaf" fill="#ec8a1c" transform="translate(25.4 6) rotate(15) scale(0.75) translate(-10 -10)"/><use href="#leaf" fill="#e8781c" transform="translate(5 21) rotate(-40) scale(0.45) translate(-10 -10)"/><use href="#leaf" fill="#f6cc1e" transform="translate(18.9 16) rotate(30) scale(0.6) translate(-10 -10)"/><use href="#leaf" fill="#d44a18" transform="translate(56.6 8) rotate(0) scale(0.8) translate(-10 -10)"/><use href="#leaf" fill="#e07a1c" transform="translate(35 9.5) rotate(20) scale(0.35) translate(-10 -10)"/><use href="#leaf" fill="#ec8a1c" transform="translate(49 10) rotate(-30) scale(0.35) translate(-10 -10)"/><use href="#leaf" fill="#c8601a" transform="translate(76 10) rotate(30) scale(0.75) translate(-10 -10)"/><use href="#leaf" fill="#b8521a" transform="translate(81 17.5) rotate(70) scale(0.6) translate(-10 -10)"/><use href="#leaf" fill="#d0661a" transform="translate(9 36) rotate(-60) scale(0.75) translate(-10 -10)"/><use href="#leaf" fill="#c85a18" transform="translate(10.5 43.5) rotate(-100) scale(0.6) translate(-10 -10)"/><use href="#leaf" fill="#f2c21e" transform="translate(78 29) rotate(40) scale(0.4) translate(-10 -10)"/><use href="#leaf" fill="#e0561c" transform="translate(81 37.5) rotate(80) scale(0.85) translate(-10 -10)"/><use href="#leaf" fill="#f6c81c" transform="translate(13 49) rotate(-30) scale(0.65) translate(-10 -10)"/><use href="#leaf" fill="#f4c01c" transform="translate(18 59.5) rotate(10) scale(0.8) translate(-10 -10)"/><use href="#leaf" fill="#d8521a" transform="translate(28.7 60) rotate(-10) scale(0.6) translate(-10 -10)"/><use href="#leaf" fill="#ec8a1c" transform="translate(57.4 60.5) rotate(20) scale(0.65) translate(-10 -10)"/><use href="#leaf" fill="#e0701a" transform="translate(40 58) rotate(0) scale(0.35) translate(-10 -10)"/><use href="#leaf" fill="#e8801c" transform="translate(68 58) rotate(30) scale(0.35) translate(-10 -10)"/><use href="#leaf" fill="#cc4418" transform="translate(81 54) rotate(60) scale(0.75) translate(-10 -10)"/>
<rect x="15.5" y="12.3" width="60" height="43.2" fill="#000" opacity="0.18"/>
<rect x="15.9" y="12.5" width="59.1" height="42.5" fill="#b4561d"/><rect x="17" y="13.6" width="57" height="40.4" fill="none" stroke="#8e3e10" stroke-width="0.8"/>
<rect x="18.5" y="15" width="54" height="37.5" fill="#0d7557"/><rect x="18.5" y="15" width="54" height="37.5" fill="url(#bshade)"/>
<use href="#leaf" fill="#f0b81c" transform="translate(71.5 51.5) scale(0.22) translate(-10 -10)"/><use href="#leaf" fill="#f6cc1e" transform="translate(18.5 16) rotate(30) scale(0.65) translate(-10 -10)"/><use href="#leaf" fill="#e8a81a" transform="translate(17 18) rotate(30) scale(0.2) translate(-10 -10)"/></symbol>
<path id="leaf" d="M10 0l2 5 4-2-1 5h5l-4 4 2 2-6 1-2 5-2-5-6-1 2-2-4-4h5L4 3l4 2z"/>
<radialGradient id="bbg" cx="0.5" cy="0.5" r="0.75"><stop offset="0.5" stop-color="#f8f8f4"/><stop offset="1" stop-color="#dcdcd4"/></radialGradient>
<radialGradient id="bshade" cx="0.5" cy="0.4" r="0.7"><stop offset="0" stop-color="#158a68" stop-opacity="0.7"/><stop offset="1" stop-color="#0a5f47" stop-opacity="0.7"/></radialGradient>
</defs></svg>
<div class="a" style="left:559px;top:142px;width:883px;height:675px;background:#f0f0f0;border:1px solid #fff;box-shadow:0 3px 18px rgba(0,0,0,.5),0 0 3px rgba(0,0,0,.45)"></div>
<div class="a" style="left:559px;top:142px;width:883px;height:30px;background:#fff"></div>
<div class="a" style="left:567px;top:148px;width:16px;height:15px;background:#2b2170;border:1px solid #86c2ff;box-shadow:0 1px 1px rgba(90,70,40,.5)"></div>
<div class="t" style="left:570px;top:148.5px;color:#a8d6ff;font-size:9.5px;letter-spacing:-0.2px">Ps</div>
<div class="dl" style="left:588px;top:149px;">打开</div>
<svg class="a" style="left:1421px;top:150px;" width="12" height="12" viewBox="0 0 12 12"><path d="M0.5 0.5l11 11M11.5 0.5l-11 11" stroke="#000" stroke-width="1.1"/></svg>
<div class="dl" style="left:585px;top:189px;">查找范围(I):</div>
<div class="a" style="left:664px;top:187px;width:261px;height:22px;background:#fff;border:1px solid #7a7a7a"></div>
<svg class="a" style="left:672px;top:190px;" width="14" height="16" viewBox="0 0 14 16"><path d="M0.5 0.5h9l3.5 2.5v12.5h-12.5z" fill="#fbe28c" stroke="#e8c860" stroke-width="0.8"/><path d="M9.5 0.5v15" stroke="#eecf6a" stroke-width="0.8"/></svg>
<div class="dl" style="left:689px;top:191px;color:#000;font-family:'Liberation Mono',monospace;font-size:11px;letter-spacing:-0.7px">work (1)</div>
<svg class="a" style="left:911px;top:195px;" width="9" height="6" viewBox="0 0 9 6"><path d="M0.5 0.5l4 4 4-4" fill="none" stroke="#333" stroke-width="1.2"/></svg>
<svg class="a" style="left:940px;top:190px;" width="16" height="16" viewBox="0 0 16 16"><defs><linearGradient id="bk" x1="0" y1="0" x2="0" y2="1"><stop offset="0" stop-color="#a8a8a8"/><stop offset="0.45" stop-color="#5a5a5a"/><stop offset="0.55" stop-color="#333"/><stop offset="1" stop-color="#8a8a8a"/></linearGradient></defs><circle cx="8" cy="8" r="7.5" fill="url(#bk)" stroke="#5c5c5c" stroke-width="0.8"/><path d="M12.5 8H5M8 4.5L4.2 8 8 11.5" fill="none" stroke="#fff" stroke-width="2"/></svg>
<svg class="a" style="left:963px;top:189px;" width="16" height="18" viewBox="0 0 16 18"><path d="M1.5 6h5l1.5 1.5h6V16.5h-12.5z" fill="#f6dc8a" stroke="#d9a93a" stroke-width="0.9"/><path d="M1.5 16.5l2-7h11.5l-1.5 7z" fill="#fdf0b4" stroke="#d9a93a" stroke-width="0.8"/><path d="M7.5 13.5c2-2 2.5-5 2-8h-2.5l4-5 3.5 5.5h-2.2c.3 3.5-1 6-3 7.5z" fill="#2fa12f" stroke="#167016" stroke-width="0.7"/></svg>
<svg class="a" style="left:986px;top:190px;" width="18" height="16" viewBox="0 0 18 16"><path d="M1.5 3.5h4.5l1.5 1.5h6V15h-12z" fill="#f6dc8a" stroke="#d9a93a" stroke-width="0.9"/><path d="M1.5 15l2.5-7.5h11.5L13 15z" fill="#fdf0b4" stroke="#d9a93a" stroke-width="0.8"/><circle cx="13.5" cy="4.8" r="2.5" fill="#f4501c"/><circle cx="13.5" cy="4.8" r="1.3" fill="#ffe04a"/><path d="M13.5 1.3v7M10 4.8h7M11 2.3l5 5M16 2.3l-5 5" stroke="#f4501c" stroke-width="0.8"/></svg>
<svg class="a" style="left:1010px;top:190px;" width="26" height="16" viewBox="0 0 26 16"><rect x="0.7" y="1.2" width="14" height="13.3" rx="1.2" fill="#eef4fc" stroke="#1464d2" stroke-width="1.2"/><rect x="0.7" y="1.2" width="14" height="3" fill="#1464d2"/><rect x="3" y="5.5" width="2" height="2.5" fill="#9a92d0"/><rect x="7" y="5.5" width="2" height="2.5" fill="#1a7ae0"/><rect x="11" y="5.5" width="2" height="2.5" fill="#0a8a1a"/><rect x="3" y="10" width="2" height="2.5" fill="#f06030"/><rect x="7" y="10" width="2" height="2.5" fill="#101090"/><rect x="11" y="10" width="2" height="2.5" fill="#d09820"/><path d="M18 6h7.5l-3.7 4z" fill="#1a1a1a"/></svg>
<svg class="a" style="left:1400px;top:189px;" width="16" height="16" viewBox="0 0 16 16"><path d="M0.8 3.5h5l1.5 1.5h7.9V15h-14.4z" fill="#f4ee58" stroke="#222" stroke-width="1"/><path d="M1.5 3.5V1.8h4l1 1.7" fill="none" stroke="#222" stroke-width="1"/><path d="M8 6.5v6.5M4.8 9.8h6.4M5.7 7.5l4.6 4.6M10.3 7.5l-4.6 4.6" stroke="#111" stroke-width="1"/></svg>
<div class="a" style="left:571px;top:211px;width:89px;height:551px;background:#f5f5f5"></div>
<svg class="a" style="left:599px;top:217px;" width="32" height="32" viewBox="0 0 32 32"><path d="M19.5 4.7L22.6 13.3L31.7 13.5L24.4 19.1L27 27.9L19.5 22.7L12 27.9L14.6 19.1L7.3 13.5L16.4 13.3z" fill="#2592f2" transform="rotate(8 19.5 17.5)"/><path d="M19.5 4.7l3 8.6 9.1.2-7.2 5.5z" fill="#52b2fa" opacity="0.6" transform="rotate(8 19.5 17.5)"/><path d="M3 9.5l9.5-2.3M1.5 15l7.5-1M3.5 21.5l7-2.5" stroke="#5cb4f8" stroke-width="1.5"/></svg>
<div class="dl" style="left:570px;top:251px;width:89px;text-align:center">快速访问</div>
<svg class="a" style="left:599px;top:279px;" width="32" height="32" viewBox="0 0 32 32"><g transform="translate(16 16) scale(0.92) translate(-16 -16)"><defs><linearGradient id="dk" x1="0" y1="0" x2="1" y2="1"><stop offset="0" stop-color="#12a0ff"/><stop offset="1" stop-color="#0a86f0"/></linearGradient></defs><rect x="1" y="5.5" width="30" height="21" fill="url(#dk)"/><path d="M1 26.5V5.5h14z" fill="#2cb0ff" opacity="0.5"/><rect x="1" y="24.5" width="30" height="2" fill="#0870d8"/><path d="M3 25.5h4M26 25.5h1M28 25.5h1" stroke="#d0e8ff" stroke-width="0.8"/></g></svg>
<div class="dl" style="left:570px;top:313px;width:89px;text-align:center">桌面</div>
<svg class="a" style="left:599px;top:341px;" width="32" height="32" viewBox="0 0 32 32"><g transform="translate(16 16) scale(0.9) translate(-16 -16)"><path d="M1 3.5h11l2 2.5h17v21H1z" fill="#e5a81c"/><path d="M1 7.5h30v19.5H1z" fill="#fcd354"/><path d="M7 27V18h18v9h-4.5v-5h-9v5z" fill="#3b8ee0"/><path d="M7 18h18v2.5H7z" fill="#2a78cc"/></g></svg>
<div class="dl" style="left:570px;top:375px;width:89px;text-align:center">库</div>
<svg class="a" style="left:599px;top:403px;" width="32" height="32" viewBox="0 0 32 32"><path d="M10 3l19 5.5v14L10 18z" fill="#1c8ce8"/><path d="M11.5 5l16 4.7v11L11.5 16.5z" fill="#4cb8fc"/><path d="M19 21l4 1v3l-6 1.5z" fill="#9aa4ae"/><path d="M13 26l8-2 6 1.5-8 2.5z" fill="#b8c0c8"/><path d="M0 24l10-4.5 12 3.5-10 5.5z" fill="#c4c8cc"/><path d="M2 24l8-3.5 9.5 2.8-8 4.2z" fill="#eceef0" stroke="#b0b4b8" stroke-width="0.5"/><path d="M4 24l7.5 2.5M6.5 23l7.5 2.5M9 22l7.5 2.5" stroke="#b8bcc0" stroke-width="0.6"/></svg>
<div class="dl" style="left:570px;top:437px;width:89px;text-align:center">此电脑</div>
<svg class="a" style="left:599px;top:465px;" width="32" height="32" viewBox="0 0 32 32"><circle cx="20" cy="13" r="11.5" fill="#3a9ad8"/><path d="M12 6c3-2 6 0 8 2s6 0 8 3-2 5-5 5-4 4-7 3-2-4-4-6-2-5 0-7z" fill="#7cc8ec" opacity="0.8"/><path d="M2 11l16 4v14L2 25z" fill="#1c8ce8"/><path d="M3.5 13l13 3.3v10.5L3.5 23.5z" fill="#4cb8fc"/><path d="M8 28l6 1.5v2H6z" fill="#b8c0c8"/></svg>
<div class="dl" style="left:570px;top:499px;width:89px;text-align:center">网络</div>
<div class="a" style="left:664px;top:215px;width:741px;height:473px;background:#fff"></div>
<div class="a" style="left:1405px;top:215px;width:15px;height:473px;background:#f0f0f0"></div>
<div class="a" style="left:1406px;top:232px;width:14px;height:50px;background:#cdcdcd"></div>
<svg class="a" style="left:1408px;top:220px;" width="9" height="6" viewBox="0 0 9 6"><path d="M0.8 5.2L4.5 1.5l3.7 3.7" fill="none" stroke="#505050" stroke-width="1.6"/></svg>
<svg class="a" style="left:1408px;top:676px;" width="9" height="6" viewBox="0 0 9 6"><path d="M0.8 0.8L4.5 4.5l3.7-3.7" fill="none" stroke="#505050" stroke-width="1.6"/></svg>
<div class="a" style="left:674px;top:241px;width:90px;height:73px;background:#fff;box-shadow:0 1px 3px rgba(0,0,0,.45);"></div>
<div class="a" style="left:684px;top:265px;width:35px;height:10px;background:#3ddbc4;border-radius:1.5px"></div>
<div class="a" style="left:688px;top:269px;width:27px;height:2px;background:repeating-linear-gradient(90deg,#258a7c 0 2px,rgba(0,0,0,0) 2px 3px);opacity:.8"></div>
<div class="a" style="left:721px;top:269px;width:3px;height:1px;background:#7fe6d6"></div>
<div class="a" style="left:723px;top:253px;width:1px;height:33px;background:#7fe6d6"></div>
<div class="a" style="left:723px;top:253px;width:3px;height:1px;background:#7fe6d6"></div>
<div class="a" style="left:726px;top:250px;width:7px;height:6px;background:#d8f8f2;border:1px solid #8fe8da"></div>
<div class="a" style="left:723px;top:261px;width:3px;height:1px;background:#7fe6d6"></div>
<div class="a" style="left:726px;top:258px;width:12px;height:6px;background:#d8f8f2;border:1px solid #8fe8da"></div>
<div class="a" style="left:723px;top:269px;width:3px;height:1px;background:#7fe6d6"></div>
<div class="a" style="left:726px;top:266px;width:7px;height:6px;background:#d8f8f2;border:1px solid #8fe8da"></div>
<div class="a" style="left:723px;top:276px;width:3px;height:1px;background:#7fe6d6"></div>
<div class="a" style="left:726px;top:273px;width:7px;height:6px;background:#d8f8f2;border:1px solid #8fe8da"></div>
<div class="a" style="left:723px;top:284px;width:3px;height:1px;background:#7fe6d6"></div>
<div class="a" style="left:726px;top:281px;width:7px;height:6px;background:#d8f8f2;border:1px solid #8fe8da"></div>
<div class="a" style="left:738px;top:262px;width:1px;height:18px;background:#b0b8b6"></div>
<div class="a" style="left:742px;top:271px;width:11px;height:6px;background:#3e4b49;border-radius:1px"></div>
<div class="a" style="left:745px;top:273px;width:5px;height:2px;background:#c8d0ce"></div>
<div class="a" style="left:705px;top:308px;width:28px;height:1px;background:#e8e8e8"></div>
<div class="lbl" style="left:667px;top:321px">1. 康奈尔笔记法.</div>
<div class="lbl" style="left:667px;top:339px">png</div>
<div class="a" style="left:777px;top:222px;width:96px;height:96px;background:#fff;border:1px solid #e2e2e2"></div>
<svg class="a" style="left:808px;top:248px;" width="34" height="44" viewBox="0 0 34 44"><path d="M1.5 1.5h23l7.5 7.5v33.5H1.5z" fill="url(#pg)" stroke="#6a6a6a" stroke-width="1"/><path d="M24.5 1.5v7.5h7.5z" fill="#ececec" stroke="#6a6a6a" stroke-width="0.9"/></svg>
<div class="lbl" style="left:772px;top:321px">1.mep</div>
<svg class="a" style="left:899px;top:228px" width="63" height="84"><use href="#blank"/></svg>
<div class="lbl" style="left:877px;top:321px">11月28日.srt</div>
<svg class="a" style="left:995px;top:226px;" width="74" height="88" viewBox="0 0 74 88"><path d="M11.5 1.2h39.5c2 0 3 .500 4.5 2l15 15c1.5 1.5 2 2.5 2 4.5V82.7c0 2.5-1.5 4-4 4H11.5c-2.5 0-4-1.5-4-4V5.2c0-2.5 1.5-4 4-4z" fill="#fbfbfb" stroke="#a6a6a6" stroke-width="1.2"/><path d="M53.5 2.2v12.5c0 3.5 1.5 5 5 5h13z" fill="#dcdcdc"/><rect x="1" y="13" width="39" height="39" rx="5.5" fill="#ea5b5d"/><path d="M12.5 22.5h9.5c8.5 0 8.5 12.5 0 12.5h-6.5M15.5 22.5v18.5c0 4.5-6.5 4.5-6.5 0 0-3.5 4-4.5 6.5-2" fill="none" stroke="#fff" stroke-width="2.6" stroke-linecap="round"/></svg>
<div class="t" style="left:1012px;top:286px;color:#c4c4c4;font-weight:bold;font-size:16.5px;line-height:18px;height:18px;letter-spacing:2.4px;transform:scaleX(1.1);transform-origin:0 0">PDF</div>
<div class="lbl" style="left:982px;top:321px">123.pdf</div>
<svg class="a" style="left:1094px;top:263px;box-shadow:0 1px 3px rgba(0,0,0,.45);" width="90" height="51" viewBox="0 0 90 51"><defs><linearGradient id="sky" x1="0" y1="0" x2="0" y2="1"><stop offset="0" stop-color="#3c6cc8"/><stop offset="0.45" stop-color="#86b4ea"/><stop offset="0.8" stop-color="#dcd8d0"/><stop offset="1" stop-color="#f4d6ac"/></linearGradient><linearGradient id="wat" x1="0" y1="0" x2="0" y2="1"><stop offset="0" stop-color="#d8d0c0"/><stop offset="0.25" stop-color="#e4c8a4"/><stop offset="0.6" stop-color="#6c86b8"/><stop offset="1" stop-color="#34569c"/></linearGradient></defs>
<rect width="90" height="27" fill="url(#sky)"/><path d="M20 4.5c8-2 22-1.5 32 0-10 1.5-24 2-32 0z" fill="#c8b4dc" opacity="0.8"/><path d="M40 12c6-1 14-1 20 0-6 1-14 1-20 0z" fill="#d8c0dc" opacity="0.7"/><path d="M62 20c8-2 18-2 28-1.5v4c-10 0-20-.5-28-2.5z" fill="#f0c8b0" opacity="0.9"/><path d="M0 18c8-2 20-1 28 1-8 1-20 1-28 0z" fill="#e8dcd0" opacity="0.8"/>
<rect y="27" width="90" height="24" fill="url(#wat)"/>
<path d="M10 26c12-1 24-5 34-12 2 0 3 .5 4 0 10 7 26 11 42 12v2H10z" fill="#274a92"/><path d="M41 15.5l3-1.5 4 0 3 2.5-3-.5-2 1-2-1z" fill="#e8ecf8"/>
<path d="M0 21l6 4 8 2 76-2v5H0z" fill="#1a3258"/><path d="M56 27l34-3v5H56z" fill="#183050"/>
<path d="M8 30c12 1 26 5 36 11 10-6 26-10 46-11z" fill="#2a4c8e" opacity="0.9"/><path d="M0 29h90v2.5H0z" fill="#22406c"/><path d="M0 31c8 1 14 3 10 5l-10 1z" fill="#1e3a66"/></svg></svg>
<div class="lbl" style="left:1087px;top:321px">2022-10-04_09...</div>
<div class="a" style="left:1199px;top:232px;width:91px;height:83px;background:#fff;box-shadow:0 1px 3px rgba(0,0,0,.45);"></div>
<svg class="a" style="left:1216px;top:236.5px;transform:rotate(-6.8deg);transform-origin:50% 50%;clip-path:inset(0 0 10% 0)" width="55" height="76"><use href="#girl" width="55" height="76"/></svg>
<div class="lbl" style="left:1192px;top:321px">2022-12-02_14...</div>
<div class="lbl" style="left:1192px;top:339px">(2).jpg</div>
<div class="a" style="left:1308px;top:224px;width:82px;height:91px;background:#fff;box-shadow:0 1px 3px rgba(0,0,0,.45);"></div>
<div class="a" style="left:1309px;top:239px;width:80px;height:61px;background:#fcfcfc"></div>
<svg class="a" style="left:1309px;top:239px;overflow:hidden" width="80" height="61"><g transform="translate(-1 60.5) rotate(-90) scale(0.93)"><use href="#girl" width="65" height="90"/></g></svg>
<div class="lbl" style="left:1297px;top:321px">2022-12-02_14...</div>
<svg class="a" style="left:686px;top:372px;background:#fbfbfb;box-shadow:0 1px 3px rgba(0,0,0,.45);" width="65" height="90"><use href="#girl" width="65" height="90"/></svg>
<div class="lbl" style="left:667px;top:469px">2022-12-02_14...</div>
<svg class="a" style="left:779px;top:395px;box-shadow:0 1px 3px rgba(0,0,0,.45);" width="90" height="67"><use href="#board" width="90" height="67"/><path d="M32 23.5h33M29.5 31.2h15.5M49 31.2h16M35.3 40.7h31" stroke="#d4eee4" stroke-width="1.5" stroke-dasharray="2.2 0.7" opacity="0.9"/></svg>
<div class="lbl" style="left:772px;top:469px">2022-12-08_11...</div>
<svg class="a" style="left:884px;top:395px;box-shadow:0 1px 3px rgba(0,0,0,.45);" width="90" height="67"><use href="#board" width="90" height="67"/></svg>
<div class="lbl" style="left:877px;top:469px">2022-12-08_11...</div>
<div class="lbl" style="left:877px;top:487px">副本.png</div>
<div class="a" style="left:989px;top:411px;width:90px;height:51px;background:linear-gradient(100deg,#a8957c,#b19d85 40%,#ad9981 70%,#a38f77);box-shadow:0 1px 3px rgba(0,0,0,.45);"></div>
<svg class="a" style="left:1020px;top:426px;" width="34" height="22" viewBox="0 0 34 22"><path d="M8 3c-2 4-4 8-6 10M5 6l6-2-7 9M9 9l5-1M3 20L14 5M16 7l3-1M14 10l10-3M19 6c0 4-1 7-3 10l4-2M15 12l7-1" fill="none" stroke="#3a342c" stroke-width="0.8"/></svg>
<div class="lbl" style="left:982px;top:469px">2023-01-02_09...</div>
<div class="a" style="left:1094px;top:409px;width:91px;height:53px;background:#fff;box-shadow:0 1px 3px rgba(0,0,0,.45);"></div>
<svg class="a" style="left:1117px;top:426px;" width="42" height="16" viewBox="0 0 42 16"><path d="M2 5h8M6 2v4M3 8c0 3 0 5 1 7M3 8h6v6M6 7v8M11 3v11M11 3l4 2-3 3 3 2-3 2M18 7l4-5 5 5M19 8h6M20 10l3 1M19 13h7M22 9v5M30 3l3-1M29 5h9M30 7h7v3h-7zM33 5v8M29 12h9M31 14l-2 1M36 13l2 2" fill="none" stroke="#2a2a2a" stroke-width="0.9"/></svg>
<div class="lbl" style="left:1087px;top:469px">2023-01-02_09...</div>
<svg class="a" style="left:1202px;top:375px;" width="76" height="86" viewBox="0 0 76 86"><path d="M12.5 1.5h43l18 18v65h-61z" fill="#f8f8f8" stroke="#8c8c8c" stroke-width="1.3"/><path d="M55.5 1.5v18h18" fill="#f4f4f4" stroke="#8c8c8c" stroke-width="1.3"/><rect x="45" y="28" width="23" height="30" fill="#fff" stroke="#e08a9c" stroke-width="0.8"/><rect x="45" y="28" width="23" height="6.5" fill="#e38a9c"/><path d="M46.5 40h5M54 40h11" stroke="#d84a62" stroke-width="1.6"/><path d="M46.5 46h5M54 46h11" stroke="#b81e36" stroke-width="1.6"/><path d="M46.5 52h5M54 52h11" stroke="#8c0e22" stroke-width="1.6"/><rect x="1" y="22" width="42" height="42" rx="3.5" fill="#a81e30"/><path d="M10.5 54L20 30h5l9.5 24h-5.2l-2-5.5H17.5l-2 5.5zM19 44h7l-3.5-9.5z" fill="#fff"/></svg>
<div class="lbl" style="left:1192px;top:469px">Database3.accdb</div>
<div class="lbl" style="left:1192px;top:487px">教程.accdb</div>
<svg class="a" style="left:1319px;top:376px;" width="63" height="84"><use href="#txt"/></svg>
<div class="lbl" style="left:1297px;top:469px">day21 .txt</div>
<svg class="a" style="left:689px;top:524px;" width="63" height="84"><use href="#txt"/></svg>
<div class="lbl" style="left:667px;top:617px">day22 .txt</div>
<svg class="a" style="left:689px;top:672px;clip-path:inset(0 0 68px 0)" width="63" height="84"><use href="#txt"/></svg>
<svg class="a" style="left:794px;top:524px;" width="63" height="84"><use href="#txt"/></svg>
<div class="lbl" style="left:772px;top:617px">day23.txt</div>
<svg class="a" style="left:794px;top:672px;clip-path:inset(0 0 68px 0)" width="63" height="84"><use href="#txt"/></svg>
<svg class="a" style="left:899px;top:524px;" width="63" height="84"><use href="#txt"/></svg>
<div class="lbl" style="left:877px;top:617px">day24 .txt</div>
<svg class="a" style="left:899px;top:672px;clip-path:inset(0 0 68px 0)" width="63" height="84"><use href="#txt"/></svg>
<svg class="a" style="left:1004px;top:524px;" width="63" height="84"><use href="#txt"/></svg>
<div class="lbl" style="left:982px;top:617px">day25 .txt</div>
<svg class="a" style="left:1004px;top:672px;clip-path:inset(0 0 68px 0)" width="63" height="84"><use href="#txt"/></svg>
<svg class="a" style="left:1109px;top:524px;" width="63" height="84"><use href="#txt"/></svg>
<div class="lbl" style="left:1087px;top:617px">day26 .txt</div>
<svg class="a" style="left:1109px;top:672px;clip-path:inset(0 0 68px 0)" width="63" height="84"><use href="#txt"/></svg>
<svg class="a" style="left:1214px;top:524px;" width="63" height="84"><use href="#txt"/></svg>
<div class="lbl" style="left:1192px;top:617px">day27 .txt</div>
<svg class="a" style="left:1214px;top:672px;clip-path:inset(0 0 68px 0)" width="63" height="84"><use href="#txt"/></svg>
<svg class="a" style="left:1319px;top:524px;" width="63" height="84"><use href="#txt"/></svg>
<div class="lbl" style="left:1297px;top:617px">day28 .txt</div>
<svg class="a" style="left:1319px;top:672px;clip-path:inset(0 0 68px 0)" width="63" height="84"><use href="#txt"/></svg>
<div class="dl" style="left:665px;top:702px;">文件名(N):</div>
<div class="a" style="left:760px;top:697px;width:553px;height:21px;background:#fff;border:1px solid #0078d7"></div>
<svg class="a" style="left:1299px;top:705px;" width="10" height="6" viewBox="0 0 10 6"><path d="M0.5 0.5l4.5 4.5 4.5-4.5" fill="none" stroke="#333" stroke-width="1.1"/></svg>
<div class="dl" style="left:665px;top:727px;">文件类型(T):</div>
<div class="a" style="left:760px;top:725px;width:553px;height:20px;background:#e1e1e1;border:1px solid #adadad"></div>
<div class="dl" style="left:763px;top:728px;">所有格式</div>
<svg class="a" style="left:1299px;top:732px;" width="10" height="6" viewBox="0 0 10 6"><path d="M0.5 0.5l4.5 4.5 4.5-4.5" fill="none" stroke="#333" stroke-width="1.1"/></svg>
<div class="a" style="left:1332px;top:698px;width:88px;height:21px;background:#e1e1e1;border:2px solid #0078d7"></div>
<div class="dl" style="left:1332px;top:701px;width:88px;text-align:center">打开(O)</div>
<div class="a" style="left:1332px;top:725px;width:88px;height:21px;background:#e1e1e1;border:1px solid #adadad"></div>
<div class="dl" style="left:1332px;top:728px;width:88px;text-align:center">取消</div>
<div class="a" style="left:679px;top:781px;width:13px;height:13px;background:#fff;border:1px solid #333"></div>
<div class="dl" style="left:694px;top:782px;">图像序列</div>
<div class="a" style="left:1437px;top:807px;width:2px;height:2px;background:#b8b8b8"></div>
<div class="a" style="left:1434px;top:810px;width:2px;height:2px;background:#b8b8b8"></div>
<div class="a" style="left:1437px;top:810px;width:2px;height:2px;background:#b8b8b8"></div>
<div class="a" style="left:1431px;top:813px;width:2px;height:2px;background:#b8b8b8"></div>
<div class="a" style="left:1434px;top:813px;width:2px;height:2px;background:#b8b8b8"></div>
<div class="a" style="left:1437px;top:813px;width:2px;height:2px;background:#b8b8b8"></div>
<svg class="a" style="left:1322px;top:724px;" width="14" height="21" viewBox="0 0 14 21"><path d="M1 1v16l3.8-3.6 2.8 6.2 2.4-1.1-2.8-6 5.3-.3z" fill="#fff" stroke="#000" stroke-width="1"/></svg>

<!-- p6_misc -->

<div class="a" style="left:0px;top:1039px;width:1920px;height:1px;background:#2a2a2a"></div>
<div class="a" style="left:0px;top:1040px;width:1920px;height:3px;background:linear-gradient(90deg,#203844 0%,#223644 40%,#223245 63%,#1f2c47 75%,#1e2a48 100%)"></div>
<div class="a" style="left:1226px;top:1040px;width:160px;height:3px;background:#5b6875"></div>
<div class="a" style="left:1857px;top:966px;width:60px;height:25px;background:#fff;border-radius:5px;box-shadow:0 0 2px rgba(0,0,0,.4)"></div>
<div class="t" style="left:1861px;top:971px;color:#333;font-size:13px">CH</div>
<svg class="a" style="left:1883px;top:971px;" width="12" height="13" viewBox="0 0 12 13"><path d="M6.5 1.5c2.5 2 3 6-1 8.5-1.5 1-3.5 1-5 .3 2.5 2.5 6.5 2 8.5-.5s1.5-7-2.5-8.3z" fill="none" stroke="#333" stroke-width="1"/></svg>
<div class="t" style="left:1899px;top:971px;color:#333;font-size:13px">简</div>
<div class="a" style="left:1833px;top:995px;width:8px;height:3px;background:#1c5a9c"></div>
<div class="a" style="left:1845px;top:995px;width:24px;height:3px;background:#1c5a9c"></div>
<div class="a" style="left:1880px;top:995px;width:14px;height:3px;background:#1c5a9c"></div>
<div class="a" style="left:1898px;top:995px;width:10px;height:3px;background:#1c5a9c"></div>
<svg class="a" style="left:1743px;top:985px;" width="80" height="58" viewBox="0 0 80 58"><path d="M1.8 27.4L46.4 3.2l13.8 13.3-5.9 2-10.4-7.4L16.7 27.4z" fill="#fff"/>

<path d="M15.7 25.4h20.8v22.8H15.7z" fill="#fff"/><path d="M24.1 28.4h7.9v6.4h-7.9zM24.1 38.3h7.9v5.9h-7.9z" fill="#4c4c4c"/>
<path d="M38.5 21.5l18-3v3.5l-18 3.4zM38.5 27.9l17.8-3.5v5l-17.8 3.9zM36.5 38.3l18.8-4v8.9l-18.8 5z" fill="#fff"/><path d="M36.5 25.4h2v8h-2z" fill="#fff"/>
<g fill="#fff"><rect x="57" y="17.5" width="3.3" height="3.3"/><rect x="63.6" y="17.5" width="3.3" height="3.3"/><rect x="60.3" y="20.8" width="3.3" height="3.3"/><rect x="66.9" y="20.8" width="3.3" height="3.3"/><rect x="57" y="24.1" width="3.3" height="3.3"/><rect x="63.6" y="24.1" width="3.3" height="3.3"/><rect x="60.3" y="27.4" width="3.3" height="3.3"/><rect x="66.9" y="27.4" width="3.3" height="3.3"/><rect x="57" y="30.7" width="3.3" height="3.3"/><rect x="63.6" y="30.7" width="3.3" height="3.3"/><rect x="60.3" y="34" width="3.3" height="3.3"/><rect x="66.9" y="34" width="2.5" height="3.3"/><rect x="57" y="37.3" width="3.3" height="3.3"/><rect x="63.6" y="37.3" width="3.3" height="3.3"/></g></svg>
<div class="t" style="left:1820px;top:995.5px;color:#fff;font-size:22px;font-weight:bold;line-height:30px;height:30px;letter-spacing:0.2px">系统之家</div>
<div class="t" style="left:1811px;top:1023.5px;color:#fff;font-family:'Liberation Serif',serif;font-size:9.5px;letter-spacing:0.92px">XITONGZHIJIA.NET</div>

</body></html>
